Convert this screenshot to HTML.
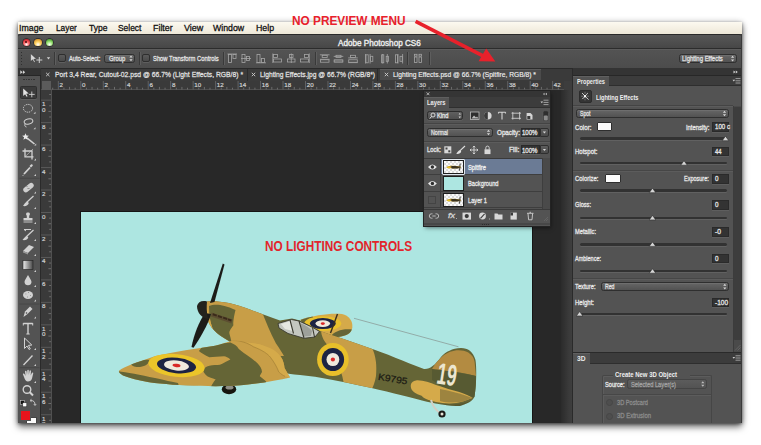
<!DOCTYPE html>
<html><head><meta charset="utf-8"><style>
html,body{margin:0;padding:0;background:#fff;width:761px;height:445px;overflow:hidden;font-family:"Liberation Sans",sans-serif}
#root{position:relative;width:761px;height:445px;overflow:hidden}
svg{position:absolute;left:0;top:0;overflow:visible}
</style></head><body><div id="root">
<div style="position:absolute;left:18px;top:22px;width:724px;height:401.3px;background:#535353;border-radius:0 0 2px 2px;box-shadow:0 4px 7px rgba(0,0,0,0.55),0 1px 3px rgba(0,0,0,0.4),0 0 6px rgba(0,0,0,0.2)"></div>
<div style="position:absolute;left:0;top:0;width:761px;height:423.3px;overflow:hidden">
<div style="position:absolute;left:18px;top:22px;width:724px;height:12px;background:linear-gradient(#fcf9f0,#eee8d8)"></div>
<div style="position: absolute; left: 19.3px; top: 23.45px; font-size: 9.5px; line-height: 9.5px; color: rgb(17, 17, 17); font-weight: normal; white-space: nowrap; transform-origin: 0px 50%; transform: scaleX(0.924); -webkit-text-stroke: 0.3px rgb(17, 17, 17);">Image</div>
<div style="position: absolute; left: 55.7px; top: 23.45px; font-size: 9.5px; line-height: 9.5px; color: rgb(17, 17, 17); font-weight: normal; white-space: nowrap; transform-origin: 0px 50%; transform: scaleX(0.875); -webkit-text-stroke: 0.3px rgb(17, 17, 17);">Layer</div>
<div style="position: absolute; left: 88.5px; top: 23.45px; font-size: 9.5px; line-height: 9.5px; color: rgb(17, 17, 17); font-weight: normal; white-space: nowrap; transform-origin: 0px 50%; transform: scaleX(0.893); -webkit-text-stroke: 0.3px rgb(17, 17, 17);">Type</div>
<div style="position: absolute; left: 118px; top: 23.45px; font-size: 9.5px; line-height: 9.5px; color: rgb(17, 17, 17); font-weight: normal; white-space: nowrap; transform-origin: 0px 50%; transform: scaleX(0.886); -webkit-text-stroke: 0.3px rgb(17, 17, 17);">Select</div>
<div style="position: absolute; left: 152.8px; top: 23.45px; font-size: 9.5px; line-height: 9.5px; color: rgb(17, 17, 17); font-weight: normal; white-space: nowrap; transform-origin: 0px 50%; transform: scaleX(0.933); -webkit-text-stroke: 0.3px rgb(17, 17, 17);">Filter</div>
<div style="position: absolute; left: 183.8px; top: 23.45px; font-size: 9.5px; line-height: 9.5px; color: rgb(17, 17, 17); font-weight: normal; white-space: nowrap; transform-origin: 0px 50%; transform: scaleX(0.945); -webkit-text-stroke: 0.3px rgb(17, 17, 17);">View</div>
<div style="position: absolute; left: 213.3px; top: 23.45px; font-size: 9.5px; line-height: 9.5px; color: rgb(17, 17, 17); font-weight: normal; white-space: nowrap; transform-origin: 0px 50%; transform: scaleX(0.923); -webkit-text-stroke: 0.3px rgb(17, 17, 17);">Window</div>
<div style="position: absolute; left: 255.9px; top: 23.45px; font-size: 9.5px; line-height: 9.5px; color: rgb(17, 17, 17); font-weight: normal; white-space: nowrap; transform-origin: 0px 50%; transform: scaleX(0.926); -webkit-text-stroke: 0.3px rgb(17, 17, 17);">Help</div>
<div style="position:absolute;left:18px;top:34px;width:724px;height:14.5px;background:linear-gradient(#575757,#474747);border-top:1.5px solid #2a2a2a;border-bottom:1px solid #2c2c2c;box-sizing:border-box;border-radius:3px 3px 0 0"></div>
<div style="position: absolute; left: 337.7px; top: 38.8px; font-size: 9px; line-height: 9px; color: rgb(236, 236, 236); font-weight: normal; white-space: nowrap; transform-origin: 0px 50%; transform: scaleX(0.904); -webkit-text-stroke: 0.4px rgb(236, 236, 236);">Adobe Photoshop CS6</div>
<div style="position:absolute;left:22.5px;top:38.699999999999996px;width:7.4px;height:7.4px;border-radius:50%;background:radial-gradient(circle at 50% 78%,#ffffff 0,#ff6b6b 38%,#c8212b 78%);box-shadow:0 0 0 0.7px #262626"></div>
<div style="position:absolute;left:34.199999999999996px;top:38.699999999999996px;width:7.4px;height:7.4px;border-radius:50%;background:radial-gradient(circle at 50% 78%,#ffffff 0,#ffd76a 38%,#d9952a 78%);box-shadow:0 0 0 0.7px #262626"></div>
<div style="position:absolute;left:46.0px;top:38.699999999999996px;width:7.4px;height:7.4px;border-radius:50%;background:radial-gradient(circle at 50% 78%,#ffffff 0,#a8ec83 38%,#4ea533 78%);box-shadow:0 0 0 0.7px #262626"></div>
<div style="position:absolute;left:25.1px;top:40.9px;width:2.2px;height:2.2px;border-radius:50%;background:#4a0606"></div>
<div style="position:absolute;left:18px;top:48.5px;width:724px;height:19.5px;background:linear-gradient(#535353,#4c4c4c);border-top:1px solid #5c5c5c;box-sizing:border-box"></div>
<div style="position:absolute;left:20.5px;top:52px;width:1.2px;height:1.2px;background:#2f2f2f"></div>
<div style="position:absolute;left:20.5px;top:55px;width:1.2px;height:1.2px;background:#2f2f2f"></div>
<div style="position:absolute;left:20.5px;top:58px;width:1.2px;height:1.2px;background:#2f2f2f"></div>
<div style="position:absolute;left:20.5px;top:61px;width:1.2px;height:1.2px;background:#2f2f2f"></div>
<div style="position:absolute;left:20.5px;top:64px;width:1.2px;height:1.2px;background:#2f2f2f"></div>
<div style="position:absolute;left:53.5px;top:51.5px;width:1px;height:13px;background:#393939;box-shadow:1px 0 0 #5e5e5e"></div>
<div style="position:absolute;left:139px;top:51.5px;width:1px;height:13px;background:#393939;box-shadow:1px 0 0 #5e5e5e"></div>
<div style="position:absolute;left:223.3px;top:51.5px;width:1px;height:13px;background:#393939;box-shadow:1px 0 0 #5e5e5e"></div>
<div style="position:absolute;left:315.4px;top:51.5px;width:1px;height:13px;background:#393939;box-shadow:1px 0 0 #5e5e5e"></div>
<div style="position:absolute;left:407.3px;top:51.5px;width:1px;height:13px;background:#393939;box-shadow:1px 0 0 #5e5e5e"></div>
<div style="position:absolute;left:428.7px;top:51.5px;width:1px;height:13px;background:#393939;box-shadow:1px 0 0 #5e5e5e"></div>
<svg width="761" height="445" style="pointer-events:none"><path d="M30.6 53.6 L30.6 61.6 L32.6 59.8 L34.2 62.4 L35.3 61.8 L33.8 59.3 L36.5 59 Z" fill="#d8d8d8" stroke="#222" stroke-width="0.4"></path><path d="M39.3 57 V63 M36.3 60 H42.3" stroke="#d0d0d0" stroke-width="1"></path><path d="M46.8 57.3 L50.2 57.3 L48.5 59.6 Z" fill="#d0d0d0"></path></svg>
<div style="position:absolute;left:58.2px;top:54.3px;width:7.8px;height:7.8px;background:linear-gradient(#5a5a5a,#4a4a4a);border:1px solid #2e2e2e;border-radius:2px;box-sizing:border-box;box-shadow:0 1px 0 #5f5f5f"></div>
<div style="position:absolute;left:142.4px;top:54.3px;width:7.8px;height:7.8px;background:linear-gradient(#5a5a5a,#4a4a4a);border:1px solid #2e2e2e;border-radius:2px;box-sizing:border-box;box-shadow:0 1px 0 #5f5f5f"></div>
<div style="position: absolute; left: 68.9px; top: 54.6px; font-size: 8px; line-height: 8px; color: rgb(230, 230, 230); font-weight: normal; white-space: nowrap; -webkit-text-stroke: 0.3px rgb(230, 230, 230); transform-origin: 0px 50%; transform: scaleX(0.718);">Auto-Select:</div>
<div style="position: absolute; left: 153px; top: 54.6px; font-size: 8px; line-height: 8px; color: rgb(230, 230, 230); font-weight: normal; white-space: nowrap; -webkit-text-stroke: 0.3px rgb(230, 230, 230); transform-origin: 0px 50%; transform: scaleX(0.728);">Show Transform Controls</div>
<div style="position:absolute;left:104.3px;top:53.7px;width:31.2px;height:9.4px;background:linear-gradient(#666,#525252);border:1px solid #2f2f2f;border-radius:2.5px;box-sizing:border-box;box-shadow:inset 0 1px 0 #6e6e6e"></div>
<div style="position: absolute; left: 108.5px; top: 54.65px; font-size: 7.5px; line-height: 7.5px; color: rgb(224, 224, 224); font-weight: normal; white-space: nowrap; -webkit-text-stroke: 0.3px rgb(224, 224, 224); transform-origin: 0px 50%; transform: scaleX(0.781);">Group</div>
<svg width="761" height="445"><path d="M129.4 57.60000000000001 L131.0 55.60000000000001 L132.6 57.60000000000001 Z M129.4 59.2 L131.0 61.2 L132.6 59.2 Z" fill="#d8d8d8"></path></svg>
<div style="position:absolute;left:679px;top:53.9px;width:58.1px;height:9.5px;background:linear-gradient(#666,#525252);border:1px solid #2f2f2f;border-radius:2.5px;box-sizing:border-box;box-shadow:inset 0 1px 0 #6e6e6e"></div>
<div style="position: absolute; left: 682.3px; top: 54.9px; font-size: 7.5px; line-height: 7.5px; color: rgb(224, 224, 224); font-weight: normal; white-space: nowrap; -webkit-text-stroke: 0.3px rgb(224, 224, 224); transform-origin: 0px 50%; transform: scaleX(0.798);">Lighting Effects</div>
<svg width="761" height="445"><path d="M731.0 57.85 L732.6 55.85 L734.2 57.85 Z M731.0 59.449999999999996 L732.6 61.449999999999996 L734.2 59.449999999999996 Z" fill="#d8d8d8"></path></svg>
<svg width="761" height="445"><rect x="228.5" y="54.5" width="3" height="8" fill="#4a4a4a" stroke="#a6a6a6" stroke-width="0.8"></rect><rect x="233" y="54.5" width="3" height="4" fill="#4a4a4a" stroke="#a6a6a6" stroke-width="0.8"></rect><path d="M227.5 54 L237 54" stroke="#a6a6a6" stroke-width="0.8"></path><rect x="242" y="54.5" width="3" height="8" fill="#4a4a4a" stroke="#a6a6a6" stroke-width="0.8"></rect><rect x="246.5" y="56.5" width="3" height="4" fill="#4a4a4a" stroke="#a6a6a6" stroke-width="0.8"></rect><path d="M241 58.5 L251 58.5" stroke="#a6a6a6" stroke-width="0.8"></path><rect x="257" y="54.5" width="3" height="8" fill="#4a4a4a" stroke="#a6a6a6" stroke-width="0.8"></rect><rect x="261.5" y="58.5" width="3" height="4" fill="#4a4a4a" stroke="#a6a6a6" stroke-width="0.8"></rect><path d="M256 62.8 L266 62.8" stroke="#a6a6a6" stroke-width="0.8"></path><rect x="273.5" y="54.5" width="4" height="3" fill="#4a4a4a" stroke="#a6a6a6" stroke-width="0.8"></rect><rect x="273.5" y="59" width="8" height="3" fill="#4a4a4a" stroke="#a6a6a6" stroke-width="0.8"></rect><path d="M272.8 53.5 L272.8 63" stroke="#a6a6a6" stroke-width="0.8"></path><rect x="289.5" y="54.5" width="3.5" height="3" fill="#4a4a4a" stroke="#a6a6a6" stroke-width="0.8"></rect><rect x="287.5" y="59" width="7.5" height="3" fill="#4a4a4a" stroke="#a6a6a6" stroke-width="0.8"></rect><path d="M291.3 53.5 L291.3 63" stroke="#a6a6a6" stroke-width="0.8"></path><rect x="304.5" y="54.5" width="4" height="3" fill="#4a4a4a" stroke="#a6a6a6" stroke-width="0.8"></rect><rect x="300.5" y="59" width="8" height="3" fill="#4a4a4a" stroke="#a6a6a6" stroke-width="0.8"></rect><path d="M309.3 53.5 L309.3 63" stroke="#a6a6a6" stroke-width="0.8"></path><rect x="322.2" y="55.3" width="5" height="2.2" fill="#4a4a4a" stroke="#a6a6a6" stroke-width="0.8"></rect><rect x="320.4" y="59.8" width="8.6" height="2.4" fill="#4a4a4a" stroke="#a6a6a6" stroke-width="0.8"></rect><path d="M319.9 54.8 L329.5 54.8" stroke="#a6a6a6" stroke-width="0.8"></path><path d="M319.9 59.3 L329.5 59.3" stroke="#a6a6a6" stroke-width="0.8"></path><rect x="336.0" y="55.3" width="5" height="2.2" fill="#4a4a4a" stroke="#a6a6a6" stroke-width="0.8"></rect><rect x="334.2" y="59.8" width="8.6" height="2.4" fill="#4a4a4a" stroke="#a6a6a6" stroke-width="0.8"></rect><path d="M333.7 56.4 L343.3 56.4" stroke="#a6a6a6" stroke-width="0.8"></path><path d="M333.7 61 L343.3 61" stroke="#a6a6a6" stroke-width="0.8"></path><rect x="350.5" y="55.3" width="5" height="2.2" fill="#4a4a4a" stroke="#a6a6a6" stroke-width="0.8"></rect><rect x="348.7" y="59.8" width="8.6" height="2.4" fill="#4a4a4a" stroke="#a6a6a6" stroke-width="0.8"></rect><path d="M348.2 57.9 L357.8 57.9" stroke="#a6a6a6" stroke-width="0.8"></path><path d="M348.2 62.6 L357.8 62.6" stroke="#a6a6a6" stroke-width="0.8"></path><rect x="366.0" y="54.8" width="2.2" height="8" fill="#4a4a4a" stroke="#a6a6a6" stroke-width="0.8"></rect><rect x="370.6" y="56.3" width="2.2" height="5" fill="#4a4a4a" stroke="#a6a6a6" stroke-width="0.8"></rect><path d="M365.5 54 L365.5 63.5" stroke="#a6a6a6" stroke-width="0.8"></path><path d="M370.1 54 L370.1 63.5" stroke="#a6a6a6" stroke-width="0.8"></path><rect x="381.59999999999997" y="54.8" width="2.2" height="8" fill="#4a4a4a" stroke="#a6a6a6" stroke-width="0.8"></rect><rect x="386.2" y="56.3" width="2.2" height="5" fill="#4a4a4a" stroke="#a6a6a6" stroke-width="0.8"></rect><path d="M382.7 54 L382.7 63.5" stroke="#a6a6a6" stroke-width="0.8"></path><path d="M387.29999999999995 54 L387.29999999999995 63.5" stroke="#a6a6a6" stroke-width="0.8"></path><rect x="395.4" y="54.8" width="2.2" height="8" fill="#4a4a4a" stroke="#a6a6a6" stroke-width="0.8"></rect><rect x="400.0" y="56.3" width="2.2" height="5" fill="#4a4a4a" stroke="#a6a6a6" stroke-width="0.8"></rect><path d="M398.0 54 L398.0 63.5" stroke="#a6a6a6" stroke-width="0.8"></path><path d="M402.59999999999997 54 L402.59999999999997 63.5" stroke="#a6a6a6" stroke-width="0.8"></path><rect x="414.5" y="57" width="2.5" height="5.5" fill="#4a4a4a" stroke="#a6a6a6" stroke-width="0.8"></rect><rect x="419" y="57" width="2.5" height="5.5" fill="#4a4a4a" stroke="#a6a6a6" stroke-width="0.8"></rect><rect x="414.5" y="54.3" width="2.5" height="1.8" fill="#4a4a4a" stroke="#a6a6a6" stroke-width="0.8"></rect><rect x="419" y="54.3" width="2.5" height="1.8" fill="#4a4a4a" stroke="#a6a6a6" stroke-width="0.8"></rect></svg>
<div style="position:absolute;left:18px;top:68px;width:22.5px;height:356px;background:#535353;border-right:1px solid #2a2a2a;box-sizing:border-box"></div>
<div style="position:absolute;left:18px;top:68px;width:22.5px;height:8px;background:#333333;border-bottom:1px solid #262626;box-sizing:border-box"></div>
<svg width="761" height="445"><path d="M20.3 70.3 L22.6 72.2 L20.3 74.1 Z M22.9 70.3 L25.2 72.2 L22.9 74.1 Z" fill="#d6d6d6"></path></svg>
<div style="position:absolute;left:23.0px;top:78.6px;width:1.6px;height:1.4px;background:#333"></div>
<div style="position:absolute;left:25.5px;top:78.6px;width:1.6px;height:1.4px;background:#333"></div>
<div style="position:absolute;left:28.0px;top:78.6px;width:1.6px;height:1.4px;background:#333"></div>
<div style="position:absolute;left:30.5px;top:78.6px;width:1.6px;height:1.4px;background:#333"></div>
<div style="position:absolute;left:33.0px;top:78.6px;width:1.6px;height:1.4px;background:#333"></div>
<div style="position:absolute;left:19.9px;top:85.8px;width:17.6px;height:13.2px;background:#3b3b3b;border:1px solid #2f2f2f;box-sizing:border-box;border-radius:1.5px;box-shadow:0 1px 0 #5e5e5e"></div>
<svg width="761" height="445"><path d="M23.2 88.4 L23.2 96 L25.1 94.3 L26.6 96.8 L27.6 96.2 L26.2 93.8 L28.7 93.5 Z" fill="#e2e2e2"></path><path d="M31.8 91.5 V97.3 M28.9 94.4 H34.7" stroke="#d2d2d2" stroke-width="0.9"></path><ellipse cx="28" cy="108.3" rx="4.6" ry="3.9" fill="none" stroke="#d2d2d2" stroke-width="1" stroke-dasharray="1.3 0.9"></ellipse><path d="M33.5 113.8 L35.5 113.8 L35.5 111.8 Z" fill="#cfcfcf"></path><ellipse cx="28.5" cy="121.5" rx="4.4" ry="2.6" fill="none" stroke="#d2d2d2" stroke-width="1" transform="rotate(-15 28.5 121.5)"></ellipse><path d="M25.5 123.5 C24 125 25 127 26.5 127" stroke="#d2d2d2" stroke-width="0.9" fill="none"></path><path d="M33.5 129.3 L35.5 129.3 L35.5 127.30000000000001 Z" fill="#cfcfcf"></path><path d="M26.8 137.8 L34.5 144" stroke="#d2d2d2" stroke-width="1.6"></path><path d="M25.5 133.2 L26.4 135.6 L28.9 135.8 L26.9 137.3 L27.6 139.8 L25.5 138.4 L23.4 139.8 L24.1 137.3 L22.1 135.8 L24.6 135.6 Z" fill="#ececec"></path><path d="M34.2 145.5 L36.2 145.5 L36.2 143.5 Z" fill="#cfcfcf"></path><path d="M25 148.5 V156.8 H33.5 M22.5 151 H32 V159.5" stroke="#d2d2d2" stroke-width="1.3" fill="none"></path><path d="M25.5 156.3 L33 149" stroke="#d2d2d2" stroke-width="0.6"></path><path d="M34 160.5 L36 160.5 L36 158.5 Z" fill="#cfcfcf"></path><path d="M24 174 L30 167.5" stroke="#d2d2d2" stroke-width="1.8"></path><path d="M29.5 166 L31 164.5 C32 163.5 33.5 165 32.5 166 L31 167.5 Z" fill="#d2d2d2"></path><path d="M23.5 174.8 L22.8 175.8" stroke="#d2d2d2" stroke-width="1"></path><path d="M34 176 L36 176 L36 174 Z" fill="#cfcfcf"></path><path d="M19.5 178.3 H39.5" stroke="#444" stroke-width="0.8"></path><rect x="22.5" y="185" width="12" height="5.2" rx="2.6" fill="#cfcfcf" transform="rotate(-40 28.5 187.6)"></rect><path d="M26.5 186 l1 1 M28.5 188 l1 1 M27.5 189 l1 -1" stroke="#555" stroke-width="0.6"></path><path d="M34 193.5 L36 193.5 L36 191.5 Z" fill="#cfcfcf"></path><path d="M26.5 202.5 L33.5 196" stroke="#d2d2d2" stroke-width="1.2"></path><path d="M27.5 201.5 C25 202 24.5 204 23 206 C25.5 206.5 28.5 205.5 28.8 203 Z" fill="#d2d2d2"></path><path d="M34 209 L36 209 L36 207 Z" fill="#cfcfcf"></path><path d="M27.5 212.5 C26 212.5 25.5 214.5 26.8 215.8 L26.8 218 H23.5 V220.5 H32.5 V218 H29.2 V215.8 C30.5 214.5 30 212.5 28.5 212.5 Z" fill="#d2d2d2"></path><path d="M23.5 222 H32.5" stroke="#d2d2d2" stroke-width="0.9"></path><path d="M34 224 L36 224 L36 222 Z" fill="#cfcfcf"></path><path d="M24 229.5 H31 M24 229.5 L26 231" stroke="#d2d2d2" stroke-width="1" fill="none"></path><path d="M26 237 L33.5 230" stroke="#d2d2d2" stroke-width="1.2"></path><path d="M27 236 C24.5 236.5 24 238.5 22.5 240 C25 240.5 28 239.5 28.3 237.5 Z" fill="#d2d2d2"></path><path d="M34 241 L36 241 L36 239 Z" fill="#cfcfcf"></path><path d="M23 251 L29 245 L34 247 L28 253 Z" fill="#d2d2d2"></path><path d="M23 251 L28 253 L28 254.5 L23 252.5 Z" fill="#9a9a9a"></path><path d="M34 256 L36 256 L36 254 Z" fill="#cfcfcf"></path><defs><linearGradient id="tg" x1="0" x2="1"><stop offset="0" stop-color="#eee"></stop><stop offset="1" stop-color="#444"></stop></linearGradient></defs><rect x="23" y="260.5" width="10" height="9" fill="url(#tg)" stroke="#222" stroke-width="0.6"></rect><path d="M34 272 L36 272 L36 270 Z" fill="#cfcfcf"></path><path d="M28 275 C26.5 278 24.5 280 24.5 282 C24.5 284 26 285.3 28 285.3 C30 285.3 31.5 284 31.5 282 C31.5 280 29.5 278 28 275 Z" fill="#d2d2d2"></path><path d="M34 287 L36 287 L36 285 Z" fill="#cfcfcf"></path><ellipse cx="28" cy="295" rx="5" ry="4" fill="#d2d2d2"></ellipse><path d="M25.5 294 h0.8 M28 292.5 h0.8 M30 295.5 h0.8 M27 297 h0.8" stroke="#777" stroke-width="0.8"></path><path d="M34 301.5 L36 301.5 L36 299.5 Z" fill="#cfcfcf"></path><path d="M19.5 304 H39.5" stroke="#444" stroke-width="0.8"></path><path d="M23.5 317 L25 311.5 L30 306.5 L32.5 309 L27.5 314 Z" fill="#d2d2d2"></path><circle cx="26.5" cy="313" r="0.8" fill="#444"></circle><path d="M34 318.5 L36 318.5 L36 316.5 Z" fill="#cfcfcf"></path><path d="M23.3 323.5 H32.7 M28 323.5 V334" stroke="#d2d2d2" stroke-width="1.4"></path><path d="M23.3 323 V325.5 M32.7 323 V325.5 M26.3 334 H29.7" stroke="#d2d2d2" stroke-width="1"></path><path d="M24.5 338 L24.5 348.5 L27 346 L29 349.5 L30.3 348.8 L28.4 345.4 L31.8 345 Z" fill="none" stroke="#d2d2d2" stroke-width="1"></path><path d="M34 350 L36 350 L36 348 Z" fill="#cfcfcf"></path><path d="M23.5 365 L32.5 355.5" stroke="#d2d2d2" stroke-width="1.3"></path><path d="M34 366 L36 366 L36 364 Z" fill="#cfcfcf"></path><path d="M19.5 367.7 H39.5" stroke="#444" stroke-width="0.8"></path><path d="M24 377 L23 374.5 C22.5 373.5 24 373 24.5 374 L25.5 376 L25 371.5 C25 370.5 26.5 370.5 26.6 371.5 L27 375 L27.3 370.5 C27.4 369.5 28.8 369.5 28.8 370.5 L28.8 375 L29.5 371 C29.7 370 31 370.2 31 371.2 L30.7 375.5 L31.8 373 C32.2 372 33.5 372.5 33.2 373.5 L32 378.5 C31.5 380.5 30 381.5 28 381.5 C26 381.5 24.8 379.5 24 377 Z" fill="#d2d2d2"></path><path d="M34 383 L36 383 L36 381 Z" fill="#cfcfcf"></path><circle cx="27" cy="389.5" r="3.8" fill="none" stroke="#d2d2d2" stroke-width="1.4"></circle><path d="M29.8 392.3 L33 395.5" stroke="#d2d2d2" stroke-width="2"></path><rect x="20.5" y="400.5" width="4" height="4" fill="#111" stroke="#ddd" stroke-width="0.5"></rect><rect x="22.8" y="402.8" width="4" height="4" fill="#fff" stroke="#222" stroke-width="0.5"></rect><path d="M31 400.5 C33.5 400.5 35 402 35 404.5 M30 400.5 L31.5 399.3 M30 400.5 L31.5 401.7 M35 405.5 L33.8 404 M35 405.5 L36.2 404" stroke="#d2d2d2" stroke-width="0.9" fill="none"></path></svg>
<div style="position:absolute;left:26px;top:416.5px;width:11px;height:7px;background:#fafafa;border:0.6px solid #444;box-sizing:border-box"></div>
<div style="position:absolute;left:20.3px;top:410.3px;width:10.4px;height:11.2px;background:#e8141c;border:0.8px solid #555;box-sizing:border-box"></div>
<div style="position:absolute;left:40.5px;top:68px;width:531px;height:12.5px;background:#3a3a3a;border-top:1px solid #2a2a2a;box-sizing:border-box"></div>
<div style="position:absolute;left:41.5px;top:68.5px;width:206px;height:12px;background:#3b3b3b;border-right:1px solid #2c2c2c;box-sizing:border-box"></div>
<div style="position:absolute;left:247.5px;top:68.5px;width:130px;height:12px;background:#3b3b3b;border-right:1px solid #2c2c2c;box-sizing:border-box"></div>
<div style="position:absolute;left:380px;top:68.7px;width:161px;height:11.8px;background:#4b4b4b;border-top:1px solid #5a5a5a;box-sizing:border-box"></div>
<svg width="761" height="445"><path d="M46.099999999999994 72.8 L49.5 76.2 M49.5 72.8 L46.099999999999994 76.2" stroke="#cfcfcf" stroke-width="0.9"></path></svg>
<svg width="761" height="445"><path d="M251.8 72.8 L255.2 76.2 M255.2 72.8 L251.8 76.2" stroke="#cfcfcf" stroke-width="0.9"></path></svg>
<svg width="761" height="445"><path d="M384.8 72.8 L388.2 76.2 M388.2 72.8 L384.8 76.2" stroke="#cfcfcf" stroke-width="0.9"></path></svg>
<div style="position: absolute; left: 55px; top: 70.8px; font-size: 7.6px; line-height: 7.6px; color: rgb(222, 222, 222); font-weight: normal; white-space: nowrap; -webkit-text-stroke: 0.3px rgb(222, 222, 222); transform-origin: 0px 50%; transform: scaleX(0.891);">Port 3,4 Rear, Cutout-02.psd @ 66.7% (Light Effects, RGB/8) *</div>
<div style="position: absolute; left: 260px; top: 70.8px; font-size: 7.6px; line-height: 7.6px; color: rgb(222, 222, 222); font-weight: normal; white-space: nowrap; -webkit-text-stroke: 0.3px rgb(222, 222, 222); transform-origin: 0px 50%; transform: scaleX(0.882);">Lighting Effects.jpg @ 66.7% (RGB/8*)</div>
<div style="position: absolute; left: 392.5px; top: 70.6px; font-size: 8px; line-height: 8px; color: rgb(242, 242, 242); font-weight: normal; white-space: nowrap; transform-origin: 0px 50%; transform: scaleX(0.835); -webkit-text-stroke: 0.15px rgb(238, 238, 238);">Lighting Effects.psd @ 66.7% (Spitfire, RGB/8) *</div>
<div style="position:absolute;left:41px;top:80.5px;width:522.5px;height:9.5px;background:#3a3a3a;border-bottom:1px solid #505050;box-sizing:border-box"></div>
<div style="position:absolute;left:40.5px;top:90px;width:11px;height:334px;background:#3a3a3a;border-right:1px solid #505050;box-sizing:border-box"></div>
<div style="position:absolute;left:42px;top:81px;width:9px;height:8.5px;background:#5b5b5b"></div>
<svg width="761" height="445"><path d="M52.71 87.7 V89.5" stroke="#7a7a7a" stroke-width="0.8"></path><path d="M58.33 81 V89.5" stroke="#686868" stroke-width="0.9"></path><path d="M63.95 87.7 V89.5" stroke="#7a7a7a" stroke-width="0.8"></path><path d="M69.56 86.9 V89.5" stroke="#7a7a7a" stroke-width="0.8"></path><path d="M75.18 87.7 V89.5" stroke="#7a7a7a" stroke-width="0.8"></path><path d="M80.80 81 V89.5" stroke="#686868" stroke-width="0.9"></path><path d="M86.42 87.7 V89.5" stroke="#7a7a7a" stroke-width="0.8"></path><path d="M92.03 86.9 V89.5" stroke="#7a7a7a" stroke-width="0.8"></path><path d="M97.65 87.7 V89.5" stroke="#7a7a7a" stroke-width="0.8"></path><path d="M103.27 81 V89.5" stroke="#686868" stroke-width="0.9"></path><path d="M108.89 87.7 V89.5" stroke="#7a7a7a" stroke-width="0.8"></path><path d="M114.50 86.9 V89.5" stroke="#7a7a7a" stroke-width="0.8"></path><path d="M120.12 87.7 V89.5" stroke="#7a7a7a" stroke-width="0.8"></path><path d="M125.74 81 V89.5" stroke="#686868" stroke-width="0.9"></path><path d="M131.36 87.7 V89.5" stroke="#7a7a7a" stroke-width="0.8"></path><path d="M136.97 86.9 V89.5" stroke="#7a7a7a" stroke-width="0.8"></path><path d="M142.59 87.7 V89.5" stroke="#7a7a7a" stroke-width="0.8"></path><path d="M148.21 81 V89.5" stroke="#686868" stroke-width="0.9"></path><path d="M153.83 87.7 V89.5" stroke="#7a7a7a" stroke-width="0.8"></path><path d="M159.44 86.9 V89.5" stroke="#7a7a7a" stroke-width="0.8"></path><path d="M165.06 87.7 V89.5" stroke="#7a7a7a" stroke-width="0.8"></path><path d="M170.68 81 V89.5" stroke="#686868" stroke-width="0.9"></path><path d="M176.30 87.7 V89.5" stroke="#7a7a7a" stroke-width="0.8"></path><path d="M181.92 86.9 V89.5" stroke="#7a7a7a" stroke-width="0.8"></path><path d="M187.53 87.7 V89.5" stroke="#7a7a7a" stroke-width="0.8"></path><path d="M193.15 81 V89.5" stroke="#686868" stroke-width="0.9"></path><path d="M198.77 87.7 V89.5" stroke="#7a7a7a" stroke-width="0.8"></path><path d="M204.38 86.9 V89.5" stroke="#7a7a7a" stroke-width="0.8"></path><path d="M210.00 87.7 V89.5" stroke="#7a7a7a" stroke-width="0.8"></path><path d="M215.62 81 V89.5" stroke="#686868" stroke-width="0.9"></path><path d="M221.24 87.7 V89.5" stroke="#7a7a7a" stroke-width="0.8"></path><path d="M226.86 86.9 V89.5" stroke="#7a7a7a" stroke-width="0.8"></path><path d="M232.47 87.7 V89.5" stroke="#7a7a7a" stroke-width="0.8"></path><path d="M238.09 81 V89.5" stroke="#686868" stroke-width="0.9"></path><path d="M243.71 87.7 V89.5" stroke="#7a7a7a" stroke-width="0.8"></path><path d="M249.32 86.9 V89.5" stroke="#7a7a7a" stroke-width="0.8"></path><path d="M254.94 87.7 V89.5" stroke="#7a7a7a" stroke-width="0.8"></path><path d="M260.56 81 V89.5" stroke="#686868" stroke-width="0.9"></path><path d="M266.18 87.7 V89.5" stroke="#7a7a7a" stroke-width="0.8"></path><path d="M271.80 86.9 V89.5" stroke="#7a7a7a" stroke-width="0.8"></path><path d="M277.41 87.7 V89.5" stroke="#7a7a7a" stroke-width="0.8"></path><path d="M283.03 81 V89.5" stroke="#686868" stroke-width="0.9"></path><path d="M288.65 87.7 V89.5" stroke="#7a7a7a" stroke-width="0.8"></path><path d="M294.26 86.9 V89.5" stroke="#7a7a7a" stroke-width="0.8"></path><path d="M299.88 87.7 V89.5" stroke="#7a7a7a" stroke-width="0.8"></path><path d="M305.50 81 V89.5" stroke="#686868" stroke-width="0.9"></path><path d="M311.12 87.7 V89.5" stroke="#7a7a7a" stroke-width="0.8"></path><path d="M316.74 86.9 V89.5" stroke="#7a7a7a" stroke-width="0.8"></path><path d="M322.35 87.7 V89.5" stroke="#7a7a7a" stroke-width="0.8"></path><path d="M327.97 81 V89.5" stroke="#686868" stroke-width="0.9"></path><path d="M333.59 87.7 V89.5" stroke="#7a7a7a" stroke-width="0.8"></path><path d="M339.20 86.9 V89.5" stroke="#7a7a7a" stroke-width="0.8"></path><path d="M344.82 87.7 V89.5" stroke="#7a7a7a" stroke-width="0.8"></path><path d="M350.44 81 V89.5" stroke="#686868" stroke-width="0.9"></path><path d="M356.06 87.7 V89.5" stroke="#7a7a7a" stroke-width="0.8"></path><path d="M361.68 86.9 V89.5" stroke="#7a7a7a" stroke-width="0.8"></path><path d="M367.29 87.7 V89.5" stroke="#7a7a7a" stroke-width="0.8"></path><path d="M372.91 81 V89.5" stroke="#686868" stroke-width="0.9"></path><path d="M378.53 87.7 V89.5" stroke="#7a7a7a" stroke-width="0.8"></path><path d="M384.15 86.9 V89.5" stroke="#7a7a7a" stroke-width="0.8"></path><path d="M389.76 87.7 V89.5" stroke="#7a7a7a" stroke-width="0.8"></path><path d="M395.38 81 V89.5" stroke="#686868" stroke-width="0.9"></path><path d="M401.00 87.7 V89.5" stroke="#7a7a7a" stroke-width="0.8"></path><path d="M406.62 86.9 V89.5" stroke="#7a7a7a" stroke-width="0.8"></path><path d="M412.23 87.7 V89.5" stroke="#7a7a7a" stroke-width="0.8"></path><path d="M417.85 81 V89.5" stroke="#686868" stroke-width="0.9"></path><path d="M423.47 87.7 V89.5" stroke="#7a7a7a" stroke-width="0.8"></path><path d="M429.08 86.9 V89.5" stroke="#7a7a7a" stroke-width="0.8"></path><path d="M434.70 87.7 V89.5" stroke="#7a7a7a" stroke-width="0.8"></path><path d="M440.32 81 V89.5" stroke="#686868" stroke-width="0.9"></path><path d="M445.94 87.7 V89.5" stroke="#7a7a7a" stroke-width="0.8"></path><path d="M451.56 86.9 V89.5" stroke="#7a7a7a" stroke-width="0.8"></path><path d="M457.17 87.7 V89.5" stroke="#7a7a7a" stroke-width="0.8"></path><path d="M462.79 81 V89.5" stroke="#686868" stroke-width="0.9"></path><path d="M468.41 87.7 V89.5" stroke="#7a7a7a" stroke-width="0.8"></path><path d="M474.03 86.9 V89.5" stroke="#7a7a7a" stroke-width="0.8"></path><path d="M479.64 87.7 V89.5" stroke="#7a7a7a" stroke-width="0.8"></path><path d="M485.26 81 V89.5" stroke="#686868" stroke-width="0.9"></path><path d="M490.88 87.7 V89.5" stroke="#7a7a7a" stroke-width="0.8"></path><path d="M496.50 86.9 V89.5" stroke="#7a7a7a" stroke-width="0.8"></path><path d="M502.11 87.7 V89.5" stroke="#7a7a7a" stroke-width="0.8"></path><path d="M507.73 81 V89.5" stroke="#686868" stroke-width="0.9"></path><path d="M513.35 87.7 V89.5" stroke="#7a7a7a" stroke-width="0.8"></path><path d="M518.96 86.9 V89.5" stroke="#7a7a7a" stroke-width="0.8"></path><path d="M524.58 87.7 V89.5" stroke="#7a7a7a" stroke-width="0.8"></path><path d="M530.20 81 V89.5" stroke="#686868" stroke-width="0.9"></path><path d="M535.82 87.7 V89.5" stroke="#7a7a7a" stroke-width="0.8"></path><path d="M541.43 86.9 V89.5" stroke="#7a7a7a" stroke-width="0.8"></path><path d="M547.05 87.7 V89.5" stroke="#7a7a7a" stroke-width="0.8"></path><path d="M552.67 81 V89.5" stroke="#686868" stroke-width="0.9"></path><path d="M558.29 87.7 V89.5" stroke="#7a7a7a" stroke-width="0.8"></path><path d="M49.2 94.53 H51" stroke="#7a7a7a" stroke-width="0.8"></path><path d="M41 100.15 H51" stroke="#5c5c5c" stroke-width="0.9"></path><path d="M49.2 105.77 H51" stroke="#7a7a7a" stroke-width="0.8"></path><path d="M48.4 111.39 H51" stroke="#7a7a7a" stroke-width="0.8"></path><path d="M49.2 117.00 H51" stroke="#7a7a7a" stroke-width="0.8"></path><path d="M41 122.62 H51" stroke="#5c5c5c" stroke-width="0.9"></path><path d="M49.2 128.24 H51" stroke="#7a7a7a" stroke-width="0.8"></path><path d="M48.4 133.86 H51" stroke="#7a7a7a" stroke-width="0.8"></path><path d="M49.2 139.47 H51" stroke="#7a7a7a" stroke-width="0.8"></path><path d="M41 145.09 H51" stroke="#5c5c5c" stroke-width="0.9"></path><path d="M49.2 150.71 H51" stroke="#7a7a7a" stroke-width="0.8"></path><path d="M48.4 156.32 H51" stroke="#7a7a7a" stroke-width="0.8"></path><path d="M49.2 161.94 H51" stroke="#7a7a7a" stroke-width="0.8"></path><path d="M41 167.56 H51" stroke="#5c5c5c" stroke-width="0.9"></path><path d="M49.2 173.18 H51" stroke="#7a7a7a" stroke-width="0.8"></path><path d="M48.4 178.80 H51" stroke="#7a7a7a" stroke-width="0.8"></path><path d="M49.2 184.41 H51" stroke="#7a7a7a" stroke-width="0.8"></path><path d="M41 190.03 H51" stroke="#5c5c5c" stroke-width="0.9"></path><path d="M49.2 195.65 H51" stroke="#7a7a7a" stroke-width="0.8"></path><path d="M48.4 201.26 H51" stroke="#7a7a7a" stroke-width="0.8"></path><path d="M49.2 206.88 H51" stroke="#7a7a7a" stroke-width="0.8"></path><path d="M41 212.50 H51" stroke="#5c5c5c" stroke-width="0.9"></path><path d="M49.2 218.12 H51" stroke="#7a7a7a" stroke-width="0.8"></path><path d="M48.4 223.74 H51" stroke="#7a7a7a" stroke-width="0.8"></path><path d="M49.2 229.35 H51" stroke="#7a7a7a" stroke-width="0.8"></path><path d="M41 234.97 H51" stroke="#5c5c5c" stroke-width="0.9"></path><path d="M49.2 240.59 H51" stroke="#7a7a7a" stroke-width="0.8"></path><path d="M48.4 246.20 H51" stroke="#7a7a7a" stroke-width="0.8"></path><path d="M49.2 251.82 H51" stroke="#7a7a7a" stroke-width="0.8"></path><path d="M41 257.44 H51" stroke="#5c5c5c" stroke-width="0.9"></path><path d="M49.2 263.06 H51" stroke="#7a7a7a" stroke-width="0.8"></path><path d="M48.4 268.68 H51" stroke="#7a7a7a" stroke-width="0.8"></path><path d="M49.2 274.29 H51" stroke="#7a7a7a" stroke-width="0.8"></path><path d="M41 279.91 H51" stroke="#5c5c5c" stroke-width="0.9"></path><path d="M49.2 285.53 H51" stroke="#7a7a7a" stroke-width="0.8"></path><path d="M48.4 291.14 H51" stroke="#7a7a7a" stroke-width="0.8"></path><path d="M49.2 296.76 H51" stroke="#7a7a7a" stroke-width="0.8"></path><path d="M41 302.38 H51" stroke="#5c5c5c" stroke-width="0.9"></path><path d="M49.2 308.00 H51" stroke="#7a7a7a" stroke-width="0.8"></path><path d="M48.4 313.62 H51" stroke="#7a7a7a" stroke-width="0.8"></path><path d="M49.2 319.23 H51" stroke="#7a7a7a" stroke-width="0.8"></path><path d="M41 324.85 H51" stroke="#5c5c5c" stroke-width="0.9"></path><path d="M49.2 330.47 H51" stroke="#7a7a7a" stroke-width="0.8"></path><path d="M48.4 336.09 H51" stroke="#7a7a7a" stroke-width="0.8"></path><path d="M49.2 341.70 H51" stroke="#7a7a7a" stroke-width="0.8"></path><path d="M41 347.32 H51" stroke="#5c5c5c" stroke-width="0.9"></path><path d="M49.2 352.94 H51" stroke="#7a7a7a" stroke-width="0.8"></path><path d="M48.4 358.56 H51" stroke="#7a7a7a" stroke-width="0.8"></path><path d="M49.2 364.17 H51" stroke="#7a7a7a" stroke-width="0.8"></path><path d="M41 369.79 H51" stroke="#5c5c5c" stroke-width="0.9"></path><path d="M49.2 375.41 H51" stroke="#7a7a7a" stroke-width="0.8"></path><path d="M48.4 381.02 H51" stroke="#7a7a7a" stroke-width="0.8"></path><path d="M49.2 386.64 H51" stroke="#7a7a7a" stroke-width="0.8"></path><path d="M41 392.26 H51" stroke="#5c5c5c" stroke-width="0.9"></path><path d="M49.2 397.88 H51" stroke="#7a7a7a" stroke-width="0.8"></path><path d="M48.4 403.50 H51" stroke="#7a7a7a" stroke-width="0.8"></path><path d="M49.2 409.11 H51" stroke="#7a7a7a" stroke-width="0.8"></path><path d="M41 414.73 H51" stroke="#5c5c5c" stroke-width="0.9"></path><path d="M49.2 420.35 H51" stroke="#7a7a7a" stroke-width="0.8"></path></svg>
<div style="position:absolute;left:59.53px;top:81.6px;font-size:6.2px;line-height:6.2px;color:#d0d0d0;-webkit-text-stroke:0.2px #d0d0d0">2</div>
<div style="position:absolute;left:82.00px;top:81.6px;font-size:6.2px;line-height:6.2px;color:#d0d0d0;-webkit-text-stroke:0.2px #d0d0d0">0</div>
<div style="position:absolute;left:104.47px;top:81.6px;font-size:6.2px;line-height:6.2px;color:#d0d0d0;-webkit-text-stroke:0.2px #d0d0d0">2</div>
<div style="position:absolute;left:126.94px;top:81.6px;font-size:6.2px;line-height:6.2px;color:#d0d0d0;-webkit-text-stroke:0.2px #d0d0d0">4</div>
<div style="position:absolute;left:149.41px;top:81.6px;font-size:6.2px;line-height:6.2px;color:#d0d0d0;-webkit-text-stroke:0.2px #d0d0d0">6</div>
<div style="position:absolute;left:171.88px;top:81.6px;font-size:6.2px;line-height:6.2px;color:#d0d0d0;-webkit-text-stroke:0.2px #d0d0d0">8</div>
<div style="position:absolute;left:194.35px;top:81.6px;font-size:6.2px;line-height:6.2px;color:#d0d0d0;-webkit-text-stroke:0.2px #d0d0d0">10</div>
<div style="position:absolute;left:216.82px;top:81.6px;font-size:6.2px;line-height:6.2px;color:#d0d0d0;-webkit-text-stroke:0.2px #d0d0d0">12</div>
<div style="position:absolute;left:239.29px;top:81.6px;font-size:6.2px;line-height:6.2px;color:#d0d0d0;-webkit-text-stroke:0.2px #d0d0d0">14</div>
<div style="position:absolute;left:261.76px;top:81.6px;font-size:6.2px;line-height:6.2px;color:#d0d0d0;-webkit-text-stroke:0.2px #d0d0d0">16</div>
<div style="position:absolute;left:284.23px;top:81.6px;font-size:6.2px;line-height:6.2px;color:#d0d0d0;-webkit-text-stroke:0.2px #d0d0d0">18</div>
<div style="position:absolute;left:306.70px;top:81.6px;font-size:6.2px;line-height:6.2px;color:#d0d0d0;-webkit-text-stroke:0.2px #d0d0d0">20</div>
<div style="position:absolute;left:329.17px;top:81.6px;font-size:6.2px;line-height:6.2px;color:#d0d0d0;-webkit-text-stroke:0.2px #d0d0d0">22</div>
<div style="position:absolute;left:351.64px;top:81.6px;font-size:6.2px;line-height:6.2px;color:#d0d0d0;-webkit-text-stroke:0.2px #d0d0d0">24</div>
<div style="position:absolute;left:374.11px;top:81.6px;font-size:6.2px;line-height:6.2px;color:#d0d0d0;-webkit-text-stroke:0.2px #d0d0d0">26</div>
<div style="position:absolute;left:396.58px;top:81.6px;font-size:6.2px;line-height:6.2px;color:#d0d0d0;-webkit-text-stroke:0.2px #d0d0d0">28</div>
<div style="position:absolute;left:419.05px;top:81.6px;font-size:6.2px;line-height:6.2px;color:#d0d0d0;-webkit-text-stroke:0.2px #d0d0d0">30</div>
<div style="position:absolute;left:441.52px;top:81.6px;font-size:6.2px;line-height:6.2px;color:#d0d0d0;-webkit-text-stroke:0.2px #d0d0d0">32</div>
<div style="position:absolute;left:463.99px;top:81.6px;font-size:6.2px;line-height:6.2px;color:#d0d0d0;-webkit-text-stroke:0.2px #d0d0d0">34</div>
<div style="position:absolute;left:486.46px;top:81.6px;font-size:6.2px;line-height:6.2px;color:#d0d0d0;-webkit-text-stroke:0.2px #d0d0d0">36</div>
<div style="position:absolute;left:508.93px;top:81.6px;font-size:6.2px;line-height:6.2px;color:#d0d0d0;-webkit-text-stroke:0.2px #d0d0d0">38</div>
<div style="position:absolute;left:531.40px;top:81.6px;font-size:6.2px;line-height:6.2px;color:#d0d0d0;-webkit-text-stroke:0.2px #d0d0d0">40</div>
<div style="position:absolute;left:553.87px;top:81.6px;font-size:6.2px;line-height:6.2px;color:#d0d0d0;-webkit-text-stroke:0.2px #d0d0d0">42</div>
<div style="position:absolute;left:40.5px;top:90px;width:11px;height:333.5px;overflow:hidden">
<div style="position:absolute;left:1.1px;top:11.15px;width:4.5px;font-size:6.2px;line-height:5.4px;color:#d0d0d0;text-align:center;word-break:break-all;-webkit-text-stroke:0.2px #d0d0d0">10</div>
<div style="position:absolute;left:1.1px;top:33.62px;width:4.5px;font-size:6.2px;line-height:5.4px;color:#d0d0d0;text-align:center;word-break:break-all;-webkit-text-stroke:0.2px #d0d0d0">8</div>
<div style="position:absolute;left:1.1px;top:56.09px;width:4.5px;font-size:6.2px;line-height:5.4px;color:#d0d0d0;text-align:center;word-break:break-all;-webkit-text-stroke:0.2px #d0d0d0">6</div>
<div style="position:absolute;left:1.1px;top:78.56px;width:4.5px;font-size:6.2px;line-height:5.4px;color:#d0d0d0;text-align:center;word-break:break-all;-webkit-text-stroke:0.2px #d0d0d0">4</div>
<div style="position:absolute;left:1.1px;top:101.03px;width:4.5px;font-size:6.2px;line-height:5.4px;color:#d0d0d0;text-align:center;word-break:break-all;-webkit-text-stroke:0.2px #d0d0d0">2</div>
<div style="position:absolute;left:1.1px;top:123.50px;width:4.5px;font-size:6.2px;line-height:5.4px;color:#d0d0d0;text-align:center;word-break:break-all;-webkit-text-stroke:0.2px #d0d0d0">0</div>
<div style="position:absolute;left:1.1px;top:145.97px;width:4.5px;font-size:6.2px;line-height:5.4px;color:#d0d0d0;text-align:center;word-break:break-all;-webkit-text-stroke:0.2px #d0d0d0">2</div>
<div style="position:absolute;left:1.1px;top:168.44px;width:4.5px;font-size:6.2px;line-height:5.4px;color:#d0d0d0;text-align:center;word-break:break-all;-webkit-text-stroke:0.2px #d0d0d0">4</div>
<div style="position:absolute;left:1.1px;top:190.91px;width:4.5px;font-size:6.2px;line-height:5.4px;color:#d0d0d0;text-align:center;word-break:break-all;-webkit-text-stroke:0.2px #d0d0d0">6</div>
<div style="position:absolute;left:1.1px;top:213.38px;width:4.5px;font-size:6.2px;line-height:5.4px;color:#d0d0d0;text-align:center;word-break:break-all;-webkit-text-stroke:0.2px #d0d0d0">8</div>
<div style="position:absolute;left:1.1px;top:235.85px;width:4.5px;font-size:6.2px;line-height:5.4px;color:#d0d0d0;text-align:center;word-break:break-all;-webkit-text-stroke:0.2px #d0d0d0">10</div>
<div style="position:absolute;left:1.1px;top:258.32px;width:4.5px;font-size:6.2px;line-height:5.4px;color:#d0d0d0;text-align:center;word-break:break-all;-webkit-text-stroke:0.2px #d0d0d0">12</div>
<div style="position:absolute;left:1.1px;top:280.79px;width:4.5px;font-size:6.2px;line-height:5.4px;color:#d0d0d0;text-align:center;word-break:break-all;-webkit-text-stroke:0.2px #d0d0d0">14</div>
<div style="position:absolute;left:1.1px;top:303.26px;width:4.5px;font-size:6.2px;line-height:5.4px;color:#d0d0d0;text-align:center;word-break:break-all;-webkit-text-stroke:0.2px #d0d0d0">16</div>
<div style="position:absolute;left:1.1px;top:325.73px;width:4.5px;font-size:6.2px;line-height:5.4px;color:#d0d0d0;text-align:center;word-break:break-all;-webkit-text-stroke:0.2px #d0d0d0">18</div>
</div>
<div style="position:absolute;left:51.5px;top:90px;width:512px;height:334px;background:#282828"></div>
<div style="position:absolute;left:80.5px;top:212px;width:451.5px;height:212px;background:#ade6e1;box-shadow:0 0 0 1px #151515"></div>
<div style="position:absolute;left:561px;top:90px;width:10.5px;height:334px;background:linear-gradient(90deg,#2b2b2b,#3a3a3a 70%,#3e3e3e)"></div>
<div style="position:absolute;left:563.5px;top:80.5px;width:8px;height:9.5px;background:#3d3d3d"></div>
<div style="position:absolute;left:571.5px;top:68px;width:1.5px;height:356px;background:#2a2a2a"></div>
<div style="position:absolute;left:573px;top:68px;width:169px;height:8px;background:#343434;border-bottom:1px solid #272727;box-sizing:border-box"></div>
<svg width="761" height="445"><path d="M733.5 70.6 L735.5 72 L733.5 73.4 Z M735.8 70.6 L737.8 72 L735.8 73.4 Z" fill="#cfcfcf"></path></svg>
<div style="position:absolute;left:573px;top:76px;width:169px;height:9.8px;background:#3c3c3c;border-bottom:1px solid #2e2e2e;box-sizing:border-box"></div>
<div style="position:absolute;left:573px;top:76px;width:36px;height:9.8px;background:#535353;border-top:1px solid #606060;box-sizing:border-box"></div>
<div style="position: absolute; left: 576.8px; top: 77.7px; font-size: 7px; line-height: 7px; color: rgb(234, 234, 234); font-weight: bold; white-space: nowrap; transform-origin: 0px 50%; transform: scaleX(0.806);">Properties</div>
<svg width="761" height="445"><path d="M732.5 79.8 L735.1 79.8 L733.8 81.6 Z" fill="#cfcfcf"></path><path d="M735.5 78.6 H740.5 M735.5 80.8 H740.5 M735.5 83.0 H740.5" stroke="#a8a8a8" stroke-width="0.9"></path></svg>
<div style="position:absolute;left:573px;top:85.8px;width:159.5px;height:266px;background:#535353"></div>
<div style="position:absolute;left:732.5px;top:106px;width:9.5px;height:246px;background:#4a4a4a;border-left:1px solid #3c3c3c;box-sizing:border-box"></div>
<div style="position:absolute;left:734px;top:107px;width:7px;height:233px;background:#3d3d3d;border-radius:1px"></div>
<svg width="761" height="445"><path d="M735 350.5 L740.5 345 M737.5 350.5 L740.5 347.5" stroke="#6a6a6a" stroke-width="0.8"></path></svg>
<div style="position:absolute;left:579.2px;top:90px;width:13px;height:12.6px;background:#353535;border:0.8px solid #2c2c2c;border-radius:2px;box-sizing:border-box"></div>
<svg width="761" height="445"><g stroke-linecap="round"><path d="M582.3 93.3 L584 95 M587.6 93.3 L585.9 95 M582.6 98.8 L584 97.4 M588.3 99.3 L586 97.2" stroke="#d4d4d4" stroke-width="0.95"></path><path d="M585 92.2 V93.4 M581.4 96.2 H582.6 M587.4 96.2 H588.6 M585 99 V100" stroke="#8a8a8a" stroke-width="0.7"></path></g><rect x="583.9" y="95.1" width="2.2" height="2.2" fill="#fff"></rect></svg>
<div style="position: absolute; left: 595.5px; top: 94px; font-size: 7px; line-height: 7px; color: rgb(240, 240, 240); font-weight: bold; white-space: nowrap; transform-origin: 0px 50%; transform: scaleX(0.802);">Lighting Effects</div>
<div style="position:absolute;left:573px;top:105.3px;width:159.5px;height:1px;background:#444;box-shadow:0 1px 0 #5c5c5c"></div>
<div style="position:absolute;left:576.4px;top:109px;width:152.6px;height:9px;background:linear-gradient(#666,#525252);border:1px solid #2f2f2f;border-radius:2.5px;box-sizing:border-box;box-shadow:inset 0 1px 0 #6e6e6e"></div>
<div style="position: absolute; left: 580px; top: 110px; font-size: 7px; line-height: 7px; color: rgb(224, 224, 224); font-weight: normal; white-space: nowrap; -webkit-text-stroke: 0.3px rgb(224, 224, 224); transform-origin: 0px 50%; transform: scaleX(0.729);">Spot</div>
<svg width="761" height="445"><path d="M722.9 112.7 L724.5 110.7 L726.1 112.7 Z M722.9 114.3 L724.5 116.3 L726.1 114.3 Z" fill="#d8d8d8"></path></svg>
<div style="position: absolute; left: 575px; top: 123.6px; font-size: 7.2px; line-height: 7.2px; color: rgb(232, 232, 232); font-weight: normal; white-space: nowrap; -webkit-text-stroke: 0.3px rgb(232, 232, 232); transform-origin: 0px 50%; transform: scaleX(0.855);">Color:</div>
<div style="position:absolute;left:596.9px;top:121.5px;width:15.6px;height:9.9px;background:#fbfbfb;border:1px solid #2e2e2e;box-sizing:border-box;border-radius:1px"></div>
<div style="position: absolute; left: 685.9px; top: 123.6px; font-size: 7.2px; line-height: 7.2px; color: rgb(232, 232, 232); font-weight: normal; white-space: nowrap; -webkit-text-stroke: 0.3px rgb(232, 232, 232); transform-origin: 0px 50%; transform: scaleX(0.81);">Intensity:</div>
<div style="position:absolute;left:711.5px;top:122.3px;width:17.8px;height:9.5px;background:#333333;border:1px solid #2a2a2a;box-sizing:border-box;box-shadow:0 1px 0 #5e5e5e"></div>
<div style="position: absolute; left: 714.5px; top: 123.45px; font-size: 7.2px; line-height: 7.2px; color: rgb(230, 230, 230); font-weight: normal; white-space: nowrap; -webkit-text-stroke: 0.3px rgb(230, 230, 230); transform-origin: 0px 50%; transform: scaleX(0.853);">100 c</div>
<div style="position:absolute;left:579.5px;top:137.3px;width:147.5px;height:2.6px;background:#323232;border-radius:1.5px;box-shadow:0 1px 0 #616161"></div>
<svg width="761" height="445"><path d="M722.2 140.7 L725.5 136.2 L728.8 140.7 Z" fill="#d6d6d6" stroke="#2e2e2e" stroke-width="0.6"></path></svg>
<div style="position: absolute; left: 575px; top: 147.7px; font-size: 7.2px; line-height: 7.2px; color: rgb(232, 232, 232); font-weight: normal; white-space: nowrap; -webkit-text-stroke: 0.3px rgb(232, 232, 232); transform-origin: 0px 50%; transform: scaleX(0.836);">Hotspot:</div>
<div style="position:absolute;left:711.5px;top:146.5px;width:17.8px;height:9.5px;background:#333333;border:1px solid #2a2a2a;box-sizing:border-box;box-shadow:0 1px 0 #5e5e5e"></div>
<div style="position: absolute; left: 714.5px; top: 147.65px; font-size: 7.2px; line-height: 7.2px; color: rgb(230, 230, 230); font-weight: normal; white-space: nowrap; -webkit-text-stroke: 0.3px rgb(230, 230, 230); transform-origin: 0px 50%; transform: scaleX(0.813);">44</div>
<div style="position:absolute;left:579.5px;top:161.8px;width:147.5px;height:2.6px;background:#323232;border-radius:1.5px;box-shadow:0 1px 0 #616161"></div>
<svg width="761" height="445"><path d="M680.7 165.2 L684 160.7 L687.3 165.2 Z" fill="#d6d6d6" stroke="#2e2e2e" stroke-width="0.6"></path></svg>
<div style="position:absolute;left:573px;top:169.6px;width:159.5px;height:1px;background:#464646;box-shadow:0 1px 0 #5c5c5c"></div>
<div style="position: absolute; left: 575px; top: 175.4px; font-size: 7.2px; line-height: 7.2px; color: rgb(232, 232, 232); font-weight: normal; white-space: nowrap; -webkit-text-stroke: 0.3px rgb(232, 232, 232); transform-origin: 0px 50%; transform: scaleX(0.825);">Colorize:</div>
<div style="position:absolute;left:605px;top:173.5px;width:15.6px;height:9.9px;background:#fbfbfb;border:1px solid #2e2e2e;box-sizing:border-box;border-radius:1px"></div>
<div style="position: absolute; left: 684.4px; top: 175.4px; font-size: 7.2px; line-height: 7.2px; color: rgb(232, 232, 232); font-weight: normal; white-space: nowrap; -webkit-text-stroke: 0.3px rgb(232, 232, 232); transform-origin: 0px 50%; transform: scaleX(0.766);">Exposure:</div>
<div style="position:absolute;left:711.5px;top:174.3px;width:17.8px;height:9.5px;background:#333333;border:1px solid #2a2a2a;box-sizing:border-box;box-shadow:0 1px 0 #5e5e5e"></div>
<div style="position: absolute; left: 714.5px; top: 175.45px; font-size: 7.2px; line-height: 7.2px; color: rgb(230, 230, 230); font-weight: normal; white-space: nowrap; -webkit-text-stroke: 0.3px rgb(230, 230, 230); transform-origin: 0px 50%; transform: scaleX(0.875);">0</div>
<div style="position:absolute;left:579.5px;top:189.3px;width:147.5px;height:2.6px;background:#323232;border-radius:1.5px;box-shadow:0 1px 0 #616161"></div>
<svg width="761" height="445"><path d="M649.2 192.7 L652.5 188.2 L655.8 192.7 Z" fill="#d6d6d6" stroke="#2e2e2e" stroke-width="0.6"></path></svg>
<div style="position: absolute; left: 575px; top: 201.4px; font-size: 7.2px; line-height: 7.2px; color: rgb(232, 232, 232); font-weight: normal; white-space: nowrap; -webkit-text-stroke: 0.3px rgb(232, 232, 232); transform-origin: 0px 50%; transform: scaleX(0.785);">Gloss:</div>
<div style="position:absolute;left:711.5px;top:200.2px;width:17.8px;height:9.5px;background:#333333;border:1px solid #2a2a2a;box-sizing:border-box;box-shadow:0 1px 0 #5e5e5e"></div>
<div style="position: absolute; left: 714.5px; top: 201.35px; font-size: 7.2px; line-height: 7.2px; color: rgb(230, 230, 230); font-weight: normal; white-space: nowrap; -webkit-text-stroke: 0.3px rgb(230, 230, 230); transform-origin: 0px 50%; transform: scaleX(0.875);">0</div>
<div style="position:absolute;left:579.5px;top:216.5px;width:147.5px;height:2.6px;background:#323232;border-radius:1.5px;box-shadow:0 1px 0 #616161"></div>
<svg width="761" height="445"><path d="M649.2 219.89999999999998 L652.5 215.39999999999998 L655.8 219.89999999999998 Z" fill="#d6d6d6" stroke="#2e2e2e" stroke-width="0.6"></path></svg>
<div style="position: absolute; left: 575px; top: 228.2px; font-size: 7.2px; line-height: 7.2px; color: rgb(232, 232, 232); font-weight: normal; white-space: nowrap; -webkit-text-stroke: 0.3px rgb(232, 232, 232); transform-origin: 0px 50%; transform: scaleX(0.796);">Metallic:</div>
<div style="position:absolute;left:711.5px;top:227px;width:17.8px;height:9.5px;background:#333333;border:1px solid #2a2a2a;box-sizing:border-box;box-shadow:0 1px 0 #5e5e5e"></div>
<div style="position: absolute; left: 714.5px; top: 228.15px; font-size: 7.2px; line-height: 7.2px; color: rgb(230, 230, 230); font-weight: normal; white-space: nowrap; -webkit-text-stroke: 0.3px rgb(230, 230, 230); transform-origin: 0px 50%; transform: scaleX(0.937);">-0</div>
<div style="position:absolute;left:579.5px;top:243.0px;width:147.5px;height:2.6px;background:#323232;border-radius:1.5px;box-shadow:0 1px 0 #616161"></div>
<svg width="761" height="445"><path d="M649.2 246.39999999999998 L652.5 241.89999999999998 L655.8 246.39999999999998 Z" fill="#d6d6d6" stroke="#2e2e2e" stroke-width="0.6"></path></svg>
<div style="position: absolute; left: 575px; top: 255px; font-size: 7.2px; line-height: 7.2px; color: rgb(232, 232, 232); font-weight: normal; white-space: nowrap; -webkit-text-stroke: 0.3px rgb(232, 232, 232); transform-origin: 0px 50%; transform: scaleX(0.765);">Ambience:</div>
<div style="position:absolute;left:711.5px;top:253.8px;width:17.8px;height:9.5px;background:#333333;border:1px solid #2a2a2a;box-sizing:border-box;box-shadow:0 1px 0 #5e5e5e"></div>
<div style="position: absolute; left: 714.5px; top: 254.95px; font-size: 7.2px; line-height: 7.2px; color: rgb(230, 230, 230); font-weight: normal; white-space: nowrap; -webkit-text-stroke: 0.3px rgb(230, 230, 230); transform-origin: 0px 50%; transform: scaleX(0.875);">0</div>
<div style="position:absolute;left:579.5px;top:269.8px;width:147.5px;height:2.6px;background:#323232;border-radius:1.5px;box-shadow:0 1px 0 #616161"></div>
<svg width="761" height="445"><path d="M649.2 273.2 L652.5 268.7 L655.8 273.2 Z" fill="#d6d6d6" stroke="#2e2e2e" stroke-width="0.6"></path></svg>
<div style="position:absolute;left:573px;top:277.5px;width:159.5px;height:1px;background:#464646;box-shadow:0 1px 0 #5c5c5c"></div>
<div style="position: absolute; left: 575px; top: 283px; font-size: 7.2px; line-height: 7.2px; color: rgb(232, 232, 232); font-weight: normal; white-space: nowrap; -webkit-text-stroke: 0.3px rgb(232, 232, 232); transform-origin: 0px 50%; transform: scaleX(0.801);">Texture:</div>
<div style="position:absolute;left:601px;top:282px;width:128.3px;height:9.3px;background:linear-gradient(#666,#525252);border:1px solid #2f2f2f;border-radius:2.5px;box-sizing:border-box;box-shadow:inset 0 1px 0 #6e6e6e"></div>
<div style="position: absolute; left: 605px; top: 283.15px; font-size: 7px; line-height: 7px; color: rgb(224, 224, 224); font-weight: normal; white-space: nowrap; -webkit-text-stroke: 0.3px rgb(224, 224, 224); transform-origin: 0px 50%; transform: scaleX(0.74);">Red</div>
<svg width="761" height="445"><path d="M723.1999999999999 285.84999999999997 L724.8 283.84999999999997 L726.4 285.84999999999997 Z M723.1999999999999 287.45 L724.8 289.45 L726.4 287.45 Z" fill="#d8d8d8"></path></svg>
<div style="position: absolute; left: 575px; top: 298.7px; font-size: 7.2px; line-height: 7.2px; color: rgb(232, 232, 232); font-weight: normal; white-space: nowrap; -webkit-text-stroke: 0.3px rgb(232, 232, 232); transform-origin: 0px 50%; transform: scaleX(0.834);">Height:</div>
<div style="position:absolute;left:711.5px;top:297.5px;width:17.8px;height:9.5px;background:#333333;border:1px solid #2a2a2a;box-sizing:border-box;box-shadow:0 1px 0 #5e5e5e"></div>
<div style="position: absolute; left: 714.5px; top: 298.65px; font-size: 7.2px; line-height: 7.2px; color: rgb(230, 230, 230); font-weight: normal; white-space: nowrap; -webkit-text-stroke: 0.3px rgb(230, 230, 230); transform-origin: 0px 50%; transform: scaleX(0.903);">-100</div>
<div style="position:absolute;left:579.5px;top:312.6px;width:147.5px;height:2.6px;background:#323232;border-radius:1.5px;box-shadow:0 1px 0 #616161"></div>
<svg width="761" height="445"><path d="M576.3000000000001 316.0 L579.6 311.5 L582.9 316.0 Z" fill="#d6d6d6" stroke="#2e2e2e" stroke-width="0.6"></path></svg>
<div style="position:absolute;left:573px;top:352px;width:169px;height:12px;background:#3c3c3c;border-top:1px solid #2a2a2a;border-bottom:1px solid #2e2e2e;box-sizing:border-box"></div>
<div style="position:absolute;left:573px;top:352.5px;width:16.5px;height:11.5px;background:#535353;border-top:1px solid #606060;box-sizing:border-box"></div>
<div style="position: absolute; left: 576.5px; top: 354.8px; font-size: 7px; line-height: 7px; color: rgb(234, 234, 234); font-weight: bold; white-space: nowrap; transform-origin: 0px 50%; transform: scaleX(0.949);">3D</div>
<svg width="761" height="445"><path d="M732.5 357 L735.1 357 L733.8 358.8 Z" fill="#cfcfcf"></path><path d="M735.5 355.8 H740.5 M735.5 358 H740.5 M735.5 360.2 H740.5" stroke="#a8a8a8" stroke-width="0.9"></path></svg>
<div style="position:absolute;left:573px;top:364px;width:169px;height:60px;background:#535353"></div>
<div style="position:absolute;left:601.8px;top:374.6px;width:109.8px;height:49.4px;border:1px solid #464646;border-bottom:0;box-shadow:inset 1px 1px 0 #5c5c5c;border-radius:2px 2px 0 0;box-sizing:border-box"></div>
<div style="position:absolute;left:613px;top:370.5px;width:77px;height:8px;background:#535353"></div>
<div style="position: absolute; left: 614.5px; top: 371px; font-size: 7.2px; line-height: 7.2px; color: rgb(240, 240, 240); font-weight: bold; white-space: nowrap; transform-origin: 0px 50%; transform: scaleX(0.83);">Create New 3D Object</div>
<div style="position: absolute; left: 604.5px; top: 380.7px; font-size: 7.2px; line-height: 7.2px; color: rgb(232, 232, 232); font-weight: normal; white-space: nowrap; -webkit-text-stroke: 0.3px rgb(232, 232, 232); transform-origin: 0px 50%; transform: scaleX(0.787);">Source:</div>
<div style="position:absolute;left:627px;top:379.3px;width:80.3px;height:9.3px;background:linear-gradient(#5c5c5c,#535353);border:1px solid #444;border-radius:2.5px;box-sizing:border-box"></div>
<div style="position: absolute; left: 631px; top: 380.5px; font-size: 7px; line-height: 7px; color: rgb(160, 160, 160); font-weight: normal; white-space: nowrap; -webkit-text-stroke: 0.3px rgb(160, 160, 160); transform-origin: 0px 50%; transform: scaleX(0.82);">Selected Layer(s)</div>
<svg width="761" height="445"><path d="M701.2 383.2 L702.8 381.2 L704.4 383.2 Z M701.2 384.8 L702.8 386.8 L704.4 384.8 Z" fill="#bdbdbd"></path></svg>
<div style="position:absolute;left:602.8px;top:393.8px;width:108px;height:1px;background:#474747;box-shadow:0 1px 0 #5c5c5c"></div>
<div style="position:absolute;left:605.5px;top:399.3px;width:7px;height:7px;background:#4e4e4e;border:1px solid #464646;border-radius:50%;box-sizing:border-box"></div>
<div style="position: absolute; left: 616.5px; top: 399.2px; font-size: 7.2px; line-height: 7.2px; color: rgb(140, 140, 140); font-weight: normal; white-space: nowrap; -webkit-text-stroke: 0.3px rgb(140, 140, 140); transform-origin: 0px 50%; transform: scaleX(0.784);">3D Postcard</div>
<div style="position:absolute;left:605.5px;top:412.5px;width:7px;height:7px;background:#4e4e4e;border:1px solid #464646;border-radius:50%;box-sizing:border-box"></div>
<div style="position: absolute; left: 616.5px; top: 412.4px; font-size: 7.2px; line-height: 7.2px; color: rgb(140, 140, 140); font-weight: normal; white-space: nowrap; -webkit-text-stroke: 0.3px rgb(140, 140, 140); transform-origin: 0px 50%; transform: scaleX(0.826);">3D Extrusion</div>
<div style="position:absolute;left:423.7px;top:91px;width:126px;height:134.5px;background:#535353;box-shadow:0 0 0 1px #232323,1px 2px 4px rgba(0,0,0,0.5)"></div>
<div style="position:absolute;left:423.7px;top:91px;width:126px;height:6px;background:#353535"></div>
<svg width="761" height="445"><path d="M426.6 92.4 L429.4 95.2 M429.4 92.4 L426.6 95.2" stroke="#cfcfcf" stroke-width="0.8"></path><path d="M544.5 92.8 L543 94 L544.5 95.2 Z M546.8 92.8 L545.3 94 L546.8 95.2 Z" fill="#cfcfcf"></path></svg>
<div style="position:absolute;left:449.2px;top:97px;width:100.5px;height:10.7px;background:#3c3c3c;border-bottom:1px solid #2f2f2f;box-sizing:border-box"></div>
<div style="position:absolute;left:423.7px;top:97px;width:25.5px;height:10.7px;background:#535353;border-top:1px solid #5f5f5f;box-sizing:border-box"></div>
<div style="position: absolute; left: 427px; top: 99.1px; font-size: 7px; line-height: 7px; color: rgb(234, 234, 234); font-weight: bold; white-space: nowrap; transform-origin: 0px 50%; transform: scaleX(0.819);">Layers</div>
<svg width="761" height="445"><path d="M540.5 101.4 L543.1 101.4 L541.8 103.2 Z" fill="#cfcfcf"></path><path d="M543.5 100.2 H548.5 M543.5 102.4 H548.5 M543.5 104.60000000000001 H548.5" stroke="#a8a8a8" stroke-width="0.9"></path></svg>
<div style="position:absolute;left:427px;top:111.3px;width:36px;height:9px;background:linear-gradient(#606060,#4e4e4e);border:1px solid #2c2c2c;border-radius:2.5px;box-sizing:border-box;box-shadow:0 1px 0 #5e5e5e"></div>
<svg width="761" height="445"><circle cx="433" cy="115" r="2" fill="none" stroke="#e0e0e0" stroke-width="0.9"></circle><path d="M431.6 116.4 L429.8 118.6" stroke="#e0e0e0" stroke-width="1"></path><path d="M458.6 114.6 L459.8 113 L461 114.6 Z M458.6 116.6 L459.8 118.2 L461 116.6 Z" fill="#d8d8d8"></path></svg>
<div style="position: absolute; left: 436.5px; top: 112.2px; font-size: 7.2px; line-height: 7.2px; color: rgb(230, 230, 230); font-weight: normal; white-space: nowrap; -webkit-text-stroke: 0.3px rgb(230, 230, 230); transform-origin: 0px 50%; transform: scaleX(0.799);">Kind</div>
<svg width="761" height="445"><rect x="470.5" y="112" width="8.5" height="7.5" fill="#2e2e2e" stroke="#bdbdbd" stroke-width="0.8"></rect><path d="M471.5 118.5 L474 115.5 L476 117.5 L477 116.5 L478.5 118.5 Z" fill="#bdbdbd"></path><circle cx="487.8" cy="115.8" r="3.8" fill="#d6d6d6"></circle><path d="M487.8 112 A3.8 3.8 0 0 0 487.8 119.6 Z" fill="#3a3a3a"></path><path d="M498.5 112.2 H505.5 M502 112.2 V119.5 M498.5 112.2 V113.6 M505.5 112.2 V113.6" stroke="#d6d6d6" stroke-width="1.1"></path><path d="M512.8 112 V119.5 M519.6 112 V119.5 M511.5 113.2 H521 M511.5 118.3 H521" stroke="#cfcfcf" stroke-width="0.9"></path><path d="M526.6 113 H530.5 L532.5 115 V119.5 H526.6 Z" fill="#d6d6d6"></path><rect x="527.3" y="116" width="3" height="3" fill="#3a3a3a"></rect><rect x="543" y="110.8" width="5.5" height="10.5" rx="1.5" fill="#2e2e2e" stroke="#5e5e5e" stroke-width="0.6"></rect><rect x="543.8" y="115.5" width="4" height="5" rx="1" fill="#8a8a8a"></rect></svg>
<div style="position:absolute;left:423.7px;top:123.2px;width:126px;height:1px;background:#444;box-shadow:0 1px 0 #5c5c5c"></div>
<div style="position:absolute;left:427px;top:128px;width:66px;height:9px;background:linear-gradient(#666,#525252);border:1px solid #2f2f2f;border-radius:2.5px;box-sizing:border-box;box-shadow:inset 0 1px 0 #6e6e6e"></div>
<div style="position: absolute; left: 430.5px; top: 128.9px; font-size: 7.2px; line-height: 7.2px; color: rgb(224, 224, 224); font-weight: normal; white-space: nowrap; -webkit-text-stroke: 0.3px rgb(224, 224, 224); transform-origin: 0px 50%; transform: scaleX(0.734);">Normal</div>
<svg width="761" height="445"><path d="M486.9 131.7 L488.5 129.7 L490.1 131.7 Z M486.9 133.3 L488.5 135.3 L490.1 133.3 Z" fill="#d8d8d8"></path></svg>
<div style="position: absolute; left: 496.5px; top: 129px; font-size: 7.2px; line-height: 7.2px; color: rgb(232, 232, 232); font-weight: normal; white-space: nowrap; -webkit-text-stroke: 0.3px rgb(232, 232, 232); transform-origin: 0px 50%; transform: scaleX(0.872);">Opacity:</div>
<div style="position:absolute;left:520.8px;top:128px;width:19px;height:9px;background:#333;border:1px solid #2a2a2a;box-sizing:border-box;box-shadow:0 1px 0 #5e5e5e"></div>
<div style="position: absolute; left: 522.3px; top: 129.1px; font-size: 7px; line-height: 7px; color: rgb(230, 230, 230); font-weight: normal; white-space: nowrap; -webkit-text-stroke: 0.3px rgb(230, 230, 230); transform-origin: 0px 50%; transform: scaleX(0.866);">100%</div>
<div style="position:absolute;left:540px;top:128px;width:8.8px;height:9px;background:linear-gradient(#5e5e5e,#4a4a4a);border:1px solid #2f2f2f;border-radius:0 2px 2px 0;box-sizing:border-box"></div>
<svg width="761" height="445"><path d="M542.8 131.5 L544.4 133.6 L546 131.5 Z" fill="#d8d8d8"></path></svg>
<div style="position:absolute;left:423.7px;top:140.7px;width:126px;height:1px;background:#444;box-shadow:0 1px 0 #5c5c5c"></div>
<div style="position: absolute; left: 427px; top: 146.4px; font-size: 7.2px; line-height: 7.2px; color: rgb(232, 232, 232); font-weight: normal; white-space: nowrap; -webkit-text-stroke: 0.3px rgb(232, 232, 232); transform-origin: 0px 50%; transform: scaleX(0.815);">Lock:</div>
<svg width="761" height="445"><rect x="444.3" y="146.3" width="7" height="7" fill="#d8d8d8"></rect><rect x="445.5" y="147.5" width="2" height="2" fill="#444"></rect><rect x="448.3" y="150.3" width="2" height="2" fill="#444"></rect><path d="M459.8 150.8 L465 146" stroke="#e0e0e0" stroke-width="1.1" fill="none"></path><path d="M460.3 150.2 C458.3 150.2 457.6 152 456.2 153.8 C458.6 154.2 461 153.2 461.2 151.2 Z" fill="#e0e0e0"></path><path d="M474 146 V154 M470 150 H478 M474 146 L472.8 147.3 M474 146 L475.2 147.3 M474 154 L472.8 152.7 M474 154 L475.2 152.7 M470 150 L471.3 148.8 M470 150 L471.3 151.2 M478 150 L476.7 148.8 M478 150 L476.7 151.2" stroke="#d8d8d8" stroke-width="0.9"></path><rect x="484.5" y="149.3" width="6" height="4.8" fill="#d8d8d8"></rect><path d="M485.8 149.5 V147.8 A1.7 1.7 0 0 1 489.2 147.8 V149.5" stroke="#d8d8d8" stroke-width="0.9" fill="none"></path></svg>
<div style="position: absolute; left: 508.5px; top: 146.4px; font-size: 7.2px; line-height: 7.2px; color: rgb(230, 230, 230); font-weight: normal; white-space: nowrap; -webkit-text-stroke: 0.3px rgb(230, 230, 230); transform-origin: 0px 50%; transform: scaleX(0.939);">Fill:</div>
<div style="position:absolute;left:520.8px;top:145.4px;width:19px;height:9px;background:#333;border:1px solid #2a2a2a;box-sizing:border-box;box-shadow:0 1px 0 #5e5e5e"></div>
<div style="position: absolute; left: 522.3px; top: 146.5px; font-size: 7px; line-height: 7px; color: rgb(230, 230, 230); font-weight: normal; white-space: nowrap; -webkit-text-stroke: 0.3px rgb(230, 230, 230); transform-origin: 0px 50%; transform: scaleX(0.866);">100%</div>
<div style="position:absolute;left:540px;top:145.4px;width:8.8px;height:9px;background:linear-gradient(#5e5e5e,#4a4a4a);border:1px solid #2f2f2f;border-radius:0 2px 2px 0;box-sizing:border-box"></div>
<svg width="761" height="445"><path d="M542.8 148.9 L544.4 151 L546 148.9 Z" fill="#d8d8d8"></path></svg>
<div style="position:absolute;left:423.7px;top:157.8px;width:126px;height:1px;background:#3a3a3a"></div>
<div style="position:absolute;left:423.7px;top:158.8px;width:118px;height:16.5px;background:#535353;border-bottom:1px solid #3e3e3e;box-sizing:border-box"></div>
<div style="position:absolute;left:440.8px;top:158.8px;width:101px;height:16.5px;background:#6b7b95;border-bottom:1px solid #3e3e3e;box-sizing:border-box"></div>
<div style="position:absolute;left:440.3px;top:158.8px;width:1px;height:16.5px;background:#3e3e3e"></div>
<svg width="761" height="445"><path d="M428 167.0 Q432.4 162.0 436.8 167.0 Q432.4 172.0 428 167.0 Z" fill="#e6e6e6"></path><circle cx="432.4" cy="167.0" r="1.7" fill="#2e2e2e"></circle></svg>
<div style="position: absolute; left: 467.8px; top: 163.5px; font-size: 7px; line-height: 7px; color: rgb(239, 239, 239); font-weight: normal; white-space: nowrap; -webkit-text-stroke: 0.3px rgb(239, 239, 239); transform-origin: 0px 50%; transform: scaleX(0.826);">Spitfire</div>
<div style="position:absolute;left:423.7px;top:175.3px;width:118px;height:16.5px;background:#535353;border-bottom:1px solid #3e3e3e;box-sizing:border-box"></div>
<div style="position:absolute;left:440.3px;top:175.3px;width:1px;height:16.5px;background:#3e3e3e"></div>
<svg width="761" height="445"><path d="M428 183.5 Q432.4 178.5 436.8 183.5 Q432.4 188.5 428 183.5 Z" fill="#e6e6e6"></path><circle cx="432.4" cy="183.5" r="1.7" fill="#2e2e2e"></circle></svg>
<div style="position: absolute; left: 467.8px; top: 180px; font-size: 7px; line-height: 7px; color: rgb(232, 232, 232); font-weight: normal; white-space: nowrap; -webkit-text-stroke: 0.3px rgb(232, 232, 232); transform-origin: 0px 50%; transform: scaleX(0.816);">Background</div>
<div style="position:absolute;left:423.7px;top:191.8px;width:118px;height:16.5px;background:#535353;border-bottom:1px solid #3e3e3e;box-sizing:border-box"></div>
<div style="position:absolute;left:440.3px;top:191.8px;width:1px;height:16.5px;background:#3e3e3e"></div>
<div style="position:absolute;left:428.3px;top:196.2px;width:7.6px;height:7.6px;border:1px solid #444;box-sizing:border-box"></div>
<div style="position: absolute; left: 467.8px; top: 196.5px; font-size: 7px; line-height: 7px; color: rgb(232, 232, 232); font-weight: normal; white-space: nowrap; -webkit-text-stroke: 0.3px rgb(232, 232, 232); transform-origin: 0px 50%; transform: scaleX(0.813);">Layer 1</div>
<div style="position:absolute;left:443.3px;top:159.6px;width:20.5px;height:14.5px;background-color:#fafafa;border:1px solid #1e1e1e;box-sizing:border-box;background-image:linear-gradient(45deg,#dcdcdc 25%,transparent 25%,transparent 75%,#dcdcdc 75%),linear-gradient(45deg,#dcdcdc 25%,transparent 25%,transparent 75%,#dcdcdc 75%);background-size:4px 4px;background-position:0 0,2px 2px"></div>
<svg width="761" height="445"><path d="M446.3 167.2 C449.3 165.4 455.3 165.6 460.8 166.6 L460.8 168.0 C455.3 168.6 449.3 168.79999999999998 446.3 167.6 Z" fill="#b8922e"></path><path d="M451.3 166.1 C454.3 165.6 457.3 166.1 459.3 166.79999999999998 L458.8 168.2 C456.3 168.6 453.3 168.6 451.3 168.2 Z" fill="#3a3320"></path><path d="M460.1 163.6 L459.6 170.6" stroke="#222" stroke-width="0.9"></path><ellipse cx="448.8" cy="167.4" rx="1.6" ry="0.9" fill="#e8c22a"></ellipse></svg>
<div style="position:absolute;left:442.3px;top:158.6px;width:22.5px;height:16.5px;border:0.9px solid #dfe6ee;border-radius:1px;box-sizing:border-box"></div>
<div style="position:absolute;left:443.3px;top:176.1px;width:20.5px;height:14.5px;background:#ade6e1;border:1px solid #1e1e1e;box-sizing:border-box"></div>
<div style="position:absolute;left:443.3px;top:192.6px;width:20.5px;height:14.5px;background-color:#fafafa;border:1px solid #1e1e1e;box-sizing:border-box;background-image:linear-gradient(45deg,#dcdcdc 25%,transparent 25%,transparent 75%,#dcdcdc 75%),linear-gradient(45deg,#dcdcdc 25%,transparent 25%,transparent 75%,#dcdcdc 75%);background-size:4px 4px;background-position:0 0,2px 2px"></div>
<svg width="761" height="445"><path d="M446.3 200.2 C449.3 198.4 455.3 198.6 460.8 199.6 L460.8 201.0 C455.3 201.6 449.3 201.79999999999998 446.3 200.6 Z" fill="#b8922e"></path><path d="M451.3 199.1 C454.3 198.6 457.3 199.1 459.3 199.79999999999998 L458.8 201.2 C456.3 201.6 453.3 201.6 451.3 201.2 Z" fill="#3a3320"></path><path d="M460.1 196.6 L459.6 203.6" stroke="#222" stroke-width="0.9"></path><ellipse cx="448.8" cy="200.4" rx="1.6" ry="0.9" fill="#e8c22a"></ellipse></svg>
<div style="position:absolute;left:541.8px;top:157.8px;width:7.9px;height:51px;background:#4a4a4a;border-left:1px solid #3e3e3e;box-sizing:border-box"></div>
<div style="position:absolute;left:423.7px;top:208.8px;width:126px;height:14.7px;background:#535353;border-top:1px solid #3a3a3a;box-sizing:border-box"></div>
<div style="position:absolute;left:423.7px;top:223.3px;width:126px;height:2.2px;background:#474747"></div>
<div style="position:absolute;left:482px;top:223.9px;width:1.2px;height:0.9px;background:#2e2e2e"></div>
<div style="position:absolute;left:484px;top:223.9px;width:1.2px;height:0.9px;background:#2e2e2e"></div>
<div style="position:absolute;left:486px;top:223.9px;width:1.2px;height:0.9px;background:#2e2e2e"></div>
<div style="position:absolute;left:488px;top:223.9px;width:1.2px;height:0.9px;background:#2e2e2e"></div>
<svg width="761" height="445"><path d="M432.5 213.8 H431.5 A2.2 2.2 0 0 0 431.5 218.2 H432.5 M435.5 213.8 H436.5 A2.2 2.2 0 0 1 436.5 218.2 H435.5 M432.3 216 H435.7" stroke="#c4c4c4" stroke-width="0.9" fill="none"></path></svg>
<div style="position: absolute; left: 448px; top: 212px; font-size: 8px; line-height: 8px; color: rgb(214, 214, 214); font-weight: normal; white-space: nowrap; -webkit-text-stroke: 0.3px rgb(214, 214, 214); transform-origin: 0px 50%; transform: scaleX(1.123);"><i>fx</i></div>
<svg width="761" height="445"><rect x="462.5" y="212.6" width="8.5" height="7" fill="#d8d8d8"></rect><circle cx="466.75" cy="216.1" r="2.1" fill="#3a3a3a"></circle><circle cx="482.5" cy="216" r="3.4" fill="#d8d8d8"></circle><path d="M480.5 218.3 L484.6 213.8" stroke="#3a3a3a" stroke-width="1.1"></path><path d="M494.5 213.5 H497.5 L498.3 214.5 H502.5 V219.5 H494.5 Z" fill="#d8d8d8"></path><path d="M510.5 212.6 H516.8 V219.6 H510.5 Z" fill="#d8d8d8"></path><path d="M510.5 212.6 H513 V215.5 H510.5 Z" fill="#3a3a3a"></path><path d="M527 213.3 H533.5 M528 213.5 L528.6 219.8 H532 L532.6 213.5 M529.5 212.3 H531" stroke="#cfcfcf" stroke-width="0.9" fill="none"></path><path d="M544 221 L548 217 M546 221 L548 219" stroke="#6a6a6a" stroke-width="0.7"></path><path d="M456 218.5 h0.8 M489 219 h0.8" stroke="#ddd" stroke-width="0.8"></path></svg>
<div style="position:absolute;left:741px;top:34px;width:1px;height:389.5px;background:#3a3a3a"></div>
<div style="position: absolute; left: 292px; top: 14.95px; font-size: 12.5px; line-height: 12.5px; color: rgb(232, 33, 43); font-weight: bold; white-space: nowrap; transform-origin: 0px 50%; transform: scaleX(0.945);">NO PREVIEW MENU</div>
<svg width="761" height="445"><path d="M415.6 21.4 L483 55.8" stroke="#e8212b" stroke-width="3.6" stroke-linecap="butt"></path><path d="M478.6 61.3 L486.2 48.6 L495.3 61.6 Z" fill="#e8212b"></path></svg>
<svg width="761" height="445"><defs><clipPath id="fc"><path d="M207 301.5 C215 300.5 232 302 250 309.5 C262 314 272 318 280 320.5 L292 318.5 L300 320.5 L320 331 C335 336 352 342 368 347.5 C385 353 405 362 424 369 C430 369.5 435 365 441 357 C446 351.5 452 348.5 461 348 C468 348 473 351.5 475.5 360 C477 370 476 388 474.5 396.5 C473 401 468 403.5 460 406 C450 406 435 404 422 400.5 C405 396 385 391 362 386 C340 381 320 377 300 375 C285 374 270 370 258 362 C245 354 236 346 229 341 C220 336 212 330 208.5 322 C206 315 205.5 307 207 301.5 Z"></path></clipPath><clipPath id="wc"><path d="M119 370.7 C125 366 135 363 155.4 355.9 C175 351.8 196 348.5 215 345.8 C222 344 227 342 233 340.8 C245 340 258 343 270 348 C280 352.5 284 360 284.5 368 L290 377.5 C275 381 255 384.5 230 386 C205 386.5 180 385.7 160 383.5 C145 382 132 379 123 375.4 C120 373.5 118.5 372 119 370.7 Z"></path></clipPath><clipPath id="fwc"><path d="M300 320 C315 315 330 313 342 314 C349 315.5 353 321 352.3 327.5 C351.5 333 347 336 338 337 L318 337 Z"></path></clipPath></defs><path d="M354 318.3 L458.5 346.8" stroke="#8b9d99" stroke-width="0.8"></path><path d="M300 320 C315 315 330 313 342 314 C349 315.5 353 321 352.3 327.5 C351.5 333 347 336 338 337 L318 337 Z" fill="#d5aa4a"></path><g clip-path="url(#fwc)"><path d="M330 337 C335 330 345 328 355 330 L355 340 Z" fill="#656536"></path><path d="M300 318 L312 315 L316 324 L305 330 Z" fill="#656536"></path></g><g transform="translate(322.8 323.6)"><ellipse rx="18.5" ry="7.4" fill="#e9c12c"></ellipse><ellipse rx="12.9" ry="5.5" fill="#1d2343"></ellipse><ellipse rx="7.3" ry="3.4" fill="#efe9dc"></ellipse><ellipse rx="2" ry="1.3" fill="#d82727"></ellipse></g><path d="M207 301.5 C215 300.5 232 302 250 309.5 C262 314 272 318 280 320.5 L292 318.5 L300 320.5 L320 331 C335 336 352 342 368 347.5 C385 353 405 362 424 369 C430 369.5 435 365 441 357 C446 351.5 452 348.5 461 348 C468 348 473 351.5 475.5 360 C477 370 476 388 474.5 396.5 C473 401 468 403.5 460 406 C450 406 435 404 422 400.5 C405 396 385 391 362 386 C340 381 320 377 300 375 C285 374 270 370 258 362 C245 354 236 346 229 341 C220 336 212 330 208.5 322 C206 315 205.5 307 207 301.5 Z" fill="#656536"></path><g clip-path="url(#fc)"><path d="M200 298 C225 298 250 304 262 312 C266 322 270 332 276 343.6 C279 348 281 351 284 356 L240 356 L225 346 C215 338 208 325 204 312 Z" fill="#c89e47"></path><path d="M209 306 C214 304 222 303.5 235.5 310 C234 316 233 322 233.4 325.3 C231 329 229 331 229.4 333.4 C230 336 231 339 231.4 341.5 L227 342 C222 338 216 334 213 330 C210 322 209 314 209 306 Z" fill="#656536"></path><path d="M206 302 C208 312 210 324 216 336 L212 336 C207 326 205 314 205 303 Z" fill="#d5aa4a"></path><path d="M321 331 C332 334 348 339 372 348 C376 356 377 366 376 376 C375 382 373 388 370 392 L345 392 C344 384 343 378 341 372 C340 364 338 356 333 350 C327 345 322 340 321 331 Z" fill="#c89e47"></path><path d="M432 369 C436 362 442 355 450 351.7 C456 349.5 463 349.5 468.3 352.6 C472 355 474 358 474.6 362 L476 376 C468 374 458 372 452 371.5 C444 371 437 370 432 369 Z" fill="#b38b41"></path><path d="M432 369 C440 370 452 371 476 376 L476 398 C470 396 462 394 455 392 C445 389 438 384 432 380 Z" fill="#575a32"></path><path d="M416.2 380.4 C423 380 430 383 436 385 C445 388 452 390 459.3 392 C465 394 470 396 472.5 398 L462.9 401.5 C455 404 445 404 436 402 C428 400 424 398.5 421.6 395.7 C416 394 411 391 410.8 386.7 C410.5 383 412.5 380.8 416.2 380.4 Z" fill="#d5aa4a"></path><path d="M440 389 C450 391 460 393 472 398 L462.9 401.5 C455 403 447 403 440 401 Z" fill="#8e7a3c" opacity="0.8"></path><path d="M300 377 C330 380 370 388 420 401 C440 405 460 407 475 399 L480 420 L290 420 Z" fill="#3d3d22" opacity="0.3"></path></g><path d="M278 323.5 L291.5 319.5 L299 321 L313 327.5 L319.5 331.5 L315 337 L304 338.3 L288 333.5 L279 328 Z" fill="#c4c7c0"></path><path d="M281 324 L290 321 L293 331 L285 329 Z" fill="#e6e8e2"></path><path d="M300 323 C306 325 310 328 312 331 L311 336 L304 336.5 Z" fill="#9da09a"></path><path d="M278 323.5 L291.5 319.5 L299 321 L313 327.5 L319.5 331.5 L315 337 L304 338.3 L288 333.5 L279 328 Z" fill="none" stroke="#3a3a30" stroke-width="0.9"></path><path d="M290 320 L293.5 333.5 M299 321 L304 338 M312.5 327.5 L314.5 337" stroke="#3a3a30" stroke-width="1.1"></path><g transform="translate(332.9 359.5)"><ellipse rx="15.8" ry="16.6" fill="#e8bf2a"></ellipse><ellipse rx="11.2" ry="11.6" fill="#1d2343"></ellipse><ellipse rx="6.4" ry="6.6" fill="#efe9dc"></ellipse><circle r="2.1" fill="#d82727"></circle></g><path d="M337.5 314 L330.5 333" stroke="#3a2e1e" stroke-width="1.4"></path><text x="377.8" y="379.8" font-family="Liberation Sans" font-size="9.2" fill="#1b1b14" stroke="#1b1b14" stroke-width="0.25" transform="rotate(9 377.8 379.8)" textLength="29.5" lengthAdjust="spacingAndGlyphs">K9795</text><text x="435.8" y="383.4" font-family="Liberation Sans" font-weight="bold" font-size="30" fill="#ece6d0" transform="rotate(9 436.3 383.2)" textLength="19.5" lengthAdjust="spacingAndGlyphs">19</text><ellipse cx="229" cy="389.3" rx="7.2" ry="5" fill="#16160f"></ellipse><ellipse cx="229.5" cy="387.5" rx="4" ry="2" fill="#8e8e86"></ellipse><path d="M119 370.7 C125 366 135 363 155.4 355.9 C175 351.8 196 348.5 215 345.8 C222 344 227 342 233 340.8 C245 340 258 343 270 348 C280 352.5 284 360 284.5 368 L290 377.5 C275 381 255 384.5 230 386 C205 386.5 180 385.7 160 383.5 C145 382 132 379 123 375.4 C120 373.5 118.5 372 119 370.7 Z" fill="#c89e47"></path><g clip-path="url(#wc)"><path d="M117 371 C125 372 140 374.5 155 378 C165 380 172 382 178 383 L180 390 L115 390 Z" fill="#656536"></path><path d="M131 363 C136 360 143 359.5 150 360 C148 364 146 366 140 367 C135 367.5 131 366 131 363 Z" fill="#656536"></path><path d="M203 345.8 L230.4 342.6 C234 344 237 346 238.8 349 C246 355 252 358 257.7 363.6 C260 366 262 369 262 372 C261 374 260 375 259.8 376.3 C262 378 264 379.5 266.2 381.5 L264 390 L209 390 C211 387 213 382 215.7 379.4 C212 378 209 377.5 207.3 376.3 C205 374 203 372 203 370 C205 367 207 366 209.4 365.7 C213 365 217 365 219.9 364.7 C224 363 227 361 230.4 359.4 C228 357.5 226 356.5 224 356.3 C219 356.5 213 357 209.4 357.3 C205 355 201 353 198.9 351 Z" fill="#656536"></path><path d="M229 340.5 C240 340 248 343 253.5 346.8 C262 350 268 354 270.4 357.3 C274 362 277 367 278.8 372 C281 374 283 375.5 285 376.3 L292 378 L290 360 L270 345 Z" fill="#d5aa4a"></path><path d="M229 340.5 C240 340 248 343 253.5 346.8 C262 350 268 354 270.4 357.3 C274 362 277 367 278.8 372 C281 374 283 375.5 285 376.3" stroke="#9c7a34" stroke-width="0.6" fill="none"></path><path d="M115 381 C140 384.5 180 386.5 230 386 C260 385 280 381 292 377.5 L295 392 L115 392 Z" fill="#3e3d26" opacity="0.35"></path></g><g transform="translate(176.5 365.5) rotate(6)"><ellipse rx="28.3" ry="11.4" fill="#ebc529"></ellipse><ellipse rx="19.6" ry="7.7" fill="#1d2343"></ellipse><ellipse rx="12.5" ry="5" fill="#efe9dc"></ellipse><ellipse rx="4" ry="1.7" fill="#d82727"></ellipse></g><path d="M431 400 C432.5 405 434.5 409.5 440 413" stroke="#d2cfc4" stroke-width="2" fill="none"></path><circle cx="442" cy="414" r="3.6" fill="#1a1a16"></circle><circle cx="442" cy="414" r="1.5" fill="#e6e2d6"></circle><path d="M222.8 263.5 L224.5 264.5 L214.5 302 L210 303 Z" fill="#1c1c18"></path><path d="M205 313 L211 314 C208 325 200 338 193.5 347.8 L191.5 347 C194 334 199 322 205 313 Z" fill="#1c1c18"></path><path d="M197 306 C198 302 202 300 207 301.5 C206.5 306 206.5 312 208 319 C202 318 197 313 197 306 Z" fill="#23231d"></path><path d="M211.5 312.5 L232.5 319.5 L231.5 323.5 L211 316.5 Z" fill="#5a4a30" opacity="0.85"></path><g fill="#3a2a1a"><path d="M213 313.3 L217 314.7 L216.5 316.6 L212.5 315.2 Z"></path><path d="M218.2 315 L222.2 316.4 L221.7 318.3 L217.7 316.9 Z"></path><path d="M223.4 316.7 L227.4 318.1 L226.9 320 L222.9 318.6 Z"></path><path d="M228.2 318.4 L231.6 319.6 L231.1 321.5 L227.7 320.3 Z"></path></g></svg>
<div style="position: absolute; left: 265px; top: 239px; font-size: 14px; line-height: 14px; color: rgb(226, 37, 44); font-weight: bold; white-space: nowrap; transform-origin: 0px 50%; transform: scaleX(0.845);">NO LIGHTING CONTROLS</div>
</div>
</div></body></html>
